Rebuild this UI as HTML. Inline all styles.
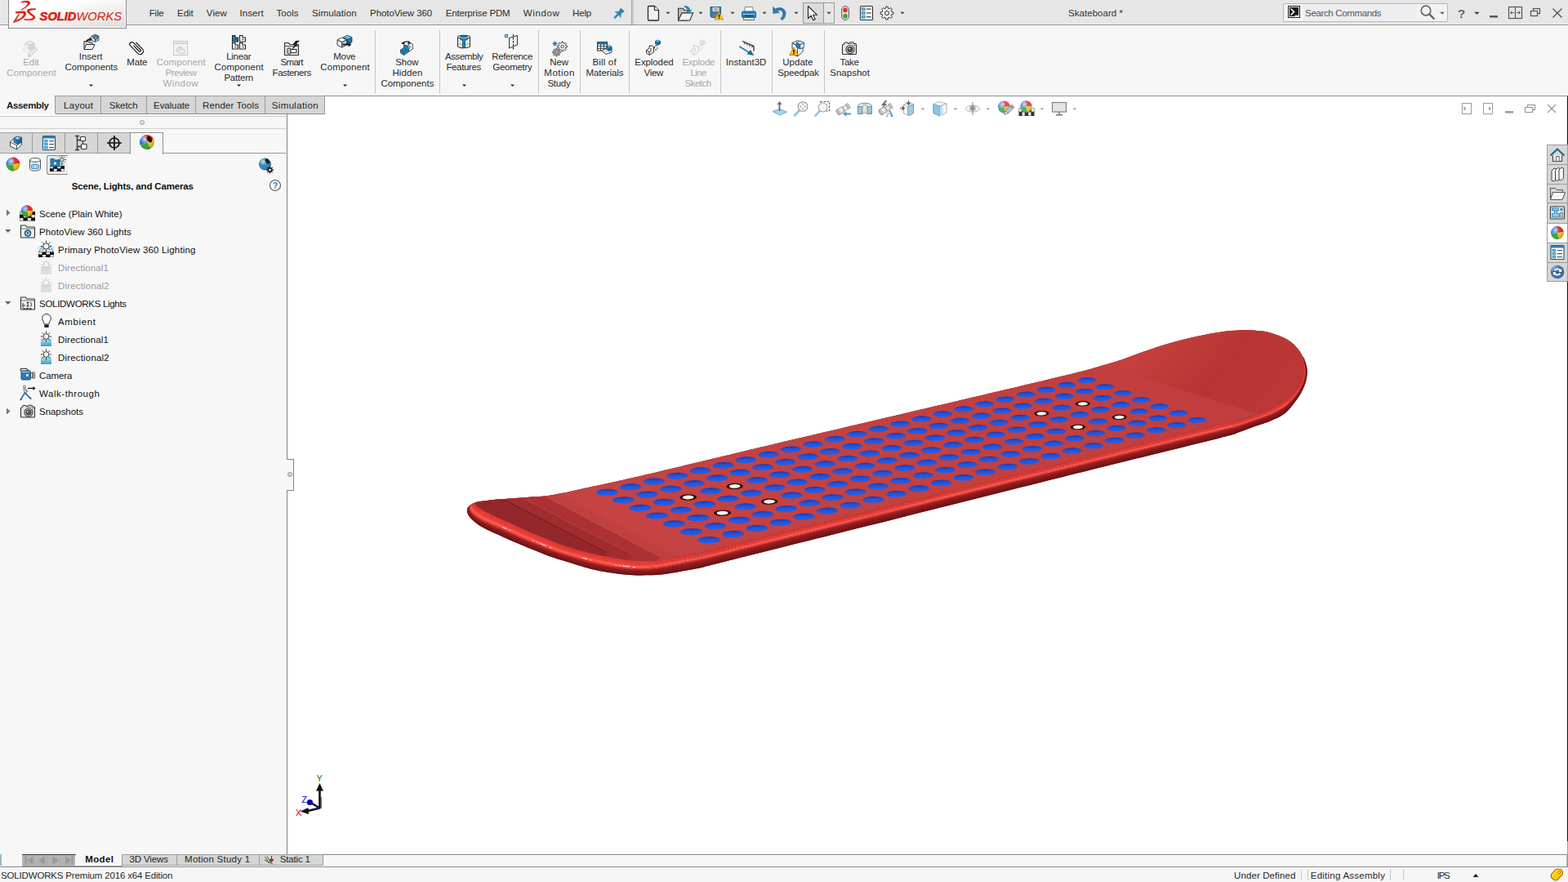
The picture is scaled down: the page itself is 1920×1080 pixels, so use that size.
<!DOCTYPE html>
<html lang="en"><head><meta charset="utf-8"><title>SOLIDWORKS Premium 2016 x64 Edition - Skateboard</title>
<style>
html,body{margin:0;padding:0;}
body{width:1920px;height:1080px;overflow:hidden;background:#fff;position:relative;font-family:"Liberation Sans", sans-serif;font-size:12px;color:#1e1e1e;}
header,section,aside,main,footer{display:block;margin:0;padding:0;}
.a{position:absolute;box-sizing:border-box;}
.t{position:absolute;white-space:pre;line-height:1;font-family:"Liberation Sans", sans-serif;}
svg{position:absolute;overflow:visible;}

#titlebar{left:0;top:0;width:1920px;height:30px;background:#e6e6e6;border-bottom:1px solid #8f8f8f;height:31px;}
#ribbon{left:0;top:31px;width:1920px;height:86px;background:#f6f6f6;}
#logo{left:10px;top:-2px;width:145px;height:37px;border:1px solid #8c8c8c;background:linear-gradient(168deg,#ffffff 30%,#dcdcdc 100%);box-shadow:inset 0 0 0 1px #fafafa;}
.vsep{width:1px;background:#c4c4c4;top:37px;height:77px;}
#cmtabs{left:0;top:117px;width:1920px;height:23px;}
.cmtab{top:117px;height:22px;background:#d6d6d6;border:1px solid #9c9c9c;border-bottom:none;}
#panel{left:0;top:140px;width:351px;height:906px;background:#f7f7f7;}
#panelborder{left:351px;top:140px;width:1px;height:906px;background:#828282;}
.ptab{top:162px;height:26px;width:41px;background:#d6d6d6;border:1px solid #9c9c9c;}
.rtab{left:1894px;width:26px;height:25px;background:#d6d6d6;border:1px solid #9c9c9c;}
#statusbar{left:0;top:1061px;width:1920px;height:19px;background:#f5f5f5;border-top:1px solid #828282;box-shadow:inset 0 1px 0 #fff;}
.btab{top:1046px;height:14px;background:#d6d6d6;border:1px solid #9c9c9c;}
.ssep{top:1064px;width:1px;height:14px;background:#c8c8c8;}

</style></head><body>
<header id="app-titlebar">
<div class="a" id="titlebar"></div>
<div class="a" style="left:0;top:29px;width:1920px;height:1px;background:#eeeeee"></div>
<div class="a" style="left:773px;top:0;width:1px;height:30px;background:#a8a8a8"></div>
<div class="a" style="left:1571px;top:4px;width:202px;height:23px;border:1px solid #b5b5b5;background:#f2f2f2;border-radius:2px"></div>
<div class="a" style="left:1596px;top:6px;width:139px;height:19px;background:#ededf2"></div>
<div class="a" style="left:1577px;top:7px;width:15px;height:15px;background:#1a1a1a;border:1px solid #222;box-shadow:inset 0 0 0 1px #e8e8e8"></div>
<div class="a" style="left:983px;top:3px;width:26px;height:26px;border:1px solid #8a9aa8;background:#dcdcdc"></div>
<div class="a" style="left:1008px;top:3px;width:14px;height:26px;border:1px solid #9a9a9a;border-left:none"></div>
<span class="t" style="left:182.80px;top:11.10px;font-size:11.5px;letter-spacing:-0.244px;color:#2a2a2a;">File</span>
<span class="t" style="left:217.10px;top:11.10px;font-size:11.5px;letter-spacing:-0.109px;color:#2a2a2a;">Edit</span>
<span class="t" style="left:252.80px;top:11.10px;font-size:11.5px;letter-spacing:0.127px;color:#2a2a2a;">View</span>
<span class="t" style="left:293.50px;top:11.10px;font-size:11.5px;letter-spacing:0.067px;color:#2a2a2a;">Insert</span>
<span class="t" style="left:338.50px;top:11.10px;font-size:11.5px;letter-spacing:0.060px;color:#2a2a2a;">Tools</span>
<span class="t" style="left:382.10px;top:11.10px;font-size:11.5px;letter-spacing:0.089px;color:#2a2a2a;">Simulation</span>
<span class="t" style="left:453.10px;top:11.10px;font-size:11.5px;letter-spacing:-0.088px;color:#2a2a2a;">PhotoView 360</span>
<span class="t" style="left:545.80px;top:11.10px;font-size:11.5px;letter-spacing:-0.182px;color:#2a2a2a;">Enterprise PDM</span>
<span class="t" style="left:640.80px;top:11.10px;font-size:11.5px;letter-spacing:0.639px;color:#2a2a2a;">Window</span>
<span class="t" style="left:701.10px;top:11.10px;font-size:11.5px;letter-spacing:-0.185px;color:#2a2a2a;">Help</span>
<span class="t" style="left:1308.10px;top:11.10px;font-size:11.5px;letter-spacing:0.027px;color:#333;">Skateboard *</span>
<span class="t" style="left:1598.10px;top:11.10px;font-size:11.5px;letter-spacing:-0.353px;color:#555;">Search Commands</span>
</header>
<section id="command-manager">
<div class="a" id="ribbon"></div>
<div class="a" style="left:0;top:31px;width:1920px;height:1px;background:#fdfdfd"></div>
<div class="a" id="logo"></div>
<div class="a vsep" style="left:459px"></div>
<div class="a vsep" style="left:538px"></div>
<div class="a vsep" style="left:659px"></div>
<div class="a vsep" style="left:710px"></div>
<div class="a vsep" style="left:770px"></div>
<div class="a vsep" style="left:882px"></div>
<div class="a vsep" style="left:945px"></div>
<div class="a vsep" style="left:1009px"></div>
<div class="a" style="left:0;top:117px;width:1920px;height:23px;background:#f6f6f6"></div>
<div class="a" style="left:0;top:139px;width:398px;height:1px;background:#8c8c8c"></div>
<div class="a" style="left:0;top:117px;width:1920px;height:1px;background:#8c8c8c"></div>
<div class="a" style="left:398px;top:118px;width:1522px;height:22px;background:#fff"></div>
<div class="a" style="left:0;top:117px;width:68px;height:23px;background:#f7f7f7"></div>
<div class="a cmtab" style="left:67px;width:57px"></div>
<div class="a cmtab" style="left:123px;width:57px"></div>
<div class="a cmtab" style="left:179px;width:61px"></div>
<div class="a cmtab" style="left:239px;width:86px"></div>
<div class="a cmtab" style="left:324px;width:74px"></div>
<span class="t" style="left:28.30px;top:70.70px;font-size:11.5px;letter-spacing:-0.109px;color:#a8a8a8;">Edit</span>
<span class="t" style="left:8.30px;top:83.70px;font-size:11.5px;letter-spacing:0.110px;color:#a8a8a8;">Component</span>
<span class="t" style="left:96.70px;top:63.70px;font-size:11.5px;letter-spacing:0.007px;color:#2a2a2a;">Insert</span>
<span class="t" style="left:79.40px;top:76.70px;font-size:11.5px;letter-spacing:-0.035px;color:#2a2a2a;">Components</span>
<span class="t" style="left:155.20px;top:70.70px;font-size:11.5px;letter-spacing:-0.093px;color:#2a2a2a;">Mate</span>
<span class="t" style="left:191.70px;top:70.70px;font-size:11.5px;letter-spacing:0.079px;color:#a8a8a8;">Component</span>
<span class="t" style="left:202.55px;top:83.70px;font-size:11.5px;letter-spacing:-0.426px;color:#a8a8a8;">Preview</span>
<span class="t" style="left:199.40px;top:96.70px;font-size:11.5px;letter-spacing:0.469px;color:#a8a8a8;">Window</span>
<span class="t" style="left:277.30px;top:63.70px;font-size:11.5px;letter-spacing:-0.324px;color:#2a2a2a;">Linear</span>
<span class="t" style="left:262.55px;top:76.70px;font-size:11.5px;letter-spacing:0.079px;color:#2a2a2a;">Component</span>
<span class="t" style="left:274.40px;top:89.70px;font-size:11.5px;letter-spacing:-0.221px;color:#2a2a2a;">Pattern</span>
<span class="t" style="left:343.55px;top:70.70px;font-size:11.5px;letter-spacing:-0.705px;color:#2a2a2a;">Smart</span>
<span class="t" style="left:333.55px;top:83.70px;font-size:11.5px;letter-spacing:-0.443px;color:#2a2a2a;">Fasteners</span>
<span class="t" style="left:408.30px;top:63.70px;font-size:11.5px;letter-spacing:-0.308px;color:#2a2a2a;">Move</span>
<span class="t" style="left:392.30px;top:76.70px;font-size:11.5px;letter-spacing:0.110px;color:#2a2a2a;">Component</span>
<span class="t" style="left:484.20px;top:70.70px;font-size:11.5px;letter-spacing:-0.110px;color:#2a2a2a;">Show</span>
<span class="t" style="left:480.40px;top:83.70px;font-size:11.5px;letter-spacing:0.109px;color:#2a2a2a;">Hidden</span>
<span class="t" style="left:466.40px;top:96.70px;font-size:11.5px;letter-spacing:-0.024px;color:#2a2a2a;">Components</span>
<span class="t" style="left:545.05px;top:63.70px;font-size:11.5px;letter-spacing:-0.444px;color:#2a2a2a;">Assembly</span>
<span class="t" style="left:546.40px;top:76.70px;font-size:11.5px;letter-spacing:-0.356px;color:#2a2a2a;">Features</span>
<span class="t" style="left:602.30px;top:63.70px;font-size:11.5px;letter-spacing:-0.370px;color:#2a2a2a;">Reference</span>
<span class="t" style="left:603.30px;top:76.70px;font-size:11.5px;letter-spacing:-0.286px;color:#2a2a2a;">Geometry</span>
<span class="t" style="left:673.30px;top:70.70px;font-size:11.5px;letter-spacing:-0.083px;color:#2a2a2a;">New</span>
<span class="t" style="left:666.30px;top:83.70px;font-size:11.5px;letter-spacing:0.514px;color:#2a2a2a;">Motion</span>
<span class="t" style="left:670.40px;top:96.70px;font-size:11.5px;letter-spacing:-0.293px;color:#2a2a2a;">Study</span>
<span class="t" style="left:725.40px;top:70.70px;font-size:11.5px;letter-spacing:0.187px;color:#2a2a2a;">Bill of</span>
<span class="t" style="left:717.55px;top:83.70px;font-size:11.5px;letter-spacing:-0.101px;color:#2a2a2a;">Materials</span>
<span class="t" style="left:777.30px;top:70.70px;font-size:11.5px;letter-spacing:-0.088px;color:#2a2a2a;">Exploded</span>
<span class="t" style="left:788.55px;top:83.70px;font-size:11.5px;letter-spacing:-0.290px;color:#2a2a2a;">View</span>
<span class="t" style="left:835.40px;top:70.70px;font-size:11.5px;letter-spacing:-0.244px;color:#a8a8a8;">Explode</span>
<span class="t" style="left:845.40px;top:83.70px;font-size:11.5px;letter-spacing:-0.550px;color:#a8a8a8;">Line</span>
<span class="t" style="left:838.55px;top:96.70px;font-size:11.5px;letter-spacing:-0.514px;color:#a8a8a8;">Sketch</span>
<span class="t" style="left:888.80px;top:70.70px;font-size:11.5px;letter-spacing:0.046px;color:#2a2a2a;">Instant3D</span>
<span class="t" style="left:958.30px;top:70.70px;font-size:11.5px;letter-spacing:0.021px;color:#2a2a2a;">Update</span>
<span class="t" style="left:952.30px;top:83.70px;font-size:11.5px;letter-spacing:-0.157px;color:#2a2a2a;">Speedpak</span>
<span class="t" style="left:1028.55px;top:70.70px;font-size:11.5px;letter-spacing:-0.349px;color:#2a2a2a;">Take</span>
<span class="t" style="left:1016.30px;top:83.70px;font-size:11.5px;letter-spacing:-0.001px;color:#2a2a2a;">Snapshot</span>
<span class="t" style="left:8.10px;top:124.10px;font-size:11.5px;letter-spacing:-0.363px;color:#1a1a1a;font-weight:700;">Assembly</span>
<span class="t" style="left:78.10px;top:124.10px;font-size:11.5px;letter-spacing:0.254px;color:#1e1e1e;">Layout</span>
<span class="t" style="left:133.80px;top:124.10px;font-size:11.5px;letter-spacing:-0.074px;color:#1e1e1e;">Sketch</span>
<span class="t" style="left:188.10px;top:124.10px;font-size:11.5px;letter-spacing:-0.095px;color:#1e1e1e;">Evaluate</span>
<span class="t" style="left:248.10px;top:124.10px;font-size:11.5px;letter-spacing:0.112px;color:#1e1e1e;">Render Tools</span>
<span class="t" style="left:332.80px;top:124.10px;font-size:11.5px;letter-spacing:0.344px;color:#1e1e1e;">Simulation</span>
</section>
<aside id="display-manager">
<div class="a" id="panel"></div>
<div class="a" id="panelborder"></div>
<div class="a" style="left:0;top:140px;width:351px;height:2px;background:#fdfdfd"></div>
<div class="a" style="left:0;top:142px;width:350px;height:1px;background:#c6c6c6"></div>
<div class="a" style="left:0;top:161px;width:350px;height:1px;background:#fdfdfd"></div>
<div class="a" style="left:0;top:157px;width:350px;height:1px;background:#d0d0d0"></div>
<div class="a" style="left:171px;top:147px;width:6px;height:6px;border-radius:50%;border:1px solid #9a9a9a;background:#e4e4e4"></div>
<div class="a" style="left:0;top:187px;width:350px;height:1px;background:#9c9c9c"></div>
<div class="a ptab" style="left:-1px"></div>
<div class="a ptab" style="left:39px"></div>
<div class="a ptab" style="left:79px"></div>
<div class="a ptab" style="left:119px"></div>
<div class="a" style="left:159px;top:162px;width:41px;height:27px;background:#f7f7f7;border:1px solid #8c8c8c;border-bottom:none;box-shadow:inset 1px 1px 0 #fff,inset -1px 0 0 #fff"></div>
<div class="a" style="left:57px;top:190px;width:26px;height:24px;border:1px solid #8a8a8a;border-right:none;border-radius:3px 0 0 3px;background:#ececec"></div>
<div class="a" style="left:351px;top:562px;width:9px;height:39px;background:#f7f7f7;border:1px solid #828282;border-left:none"></div>
<span class="t" style="left:87.70px;top:223.10px;font-size:11.5px;letter-spacing:-0.168px;color:#111;font-weight:700;">Scene, Lights, and Cameras</span>
<span class="t" style="left:48.10px;top:257.10px;font-size:11.5px;letter-spacing:-0.013px;color:#111;">Scene (Plain White)</span>
<span class="t" style="left:48.10px;top:279.10px;font-size:11.5px;letter-spacing:0.082px;color:#111;">PhotoView 360 Lights</span>
<span class="t" style="left:71.05px;top:301.10px;font-size:11.5px;letter-spacing:0.173px;color:#111;">Primary PhotoView 360 Lighting</span>
<span class="t" style="left:71.05px;top:323.10px;font-size:11.5px;letter-spacing:0.101px;color:#9a9a9a;">Directional1</span>
<span class="t" style="left:71.05px;top:345.10px;font-size:11.5px;letter-spacing:0.170px;color:#9a9a9a;">Directional2</span>
<span class="t" style="left:48.10px;top:367.10px;font-size:11.5px;letter-spacing:-0.303px;color:#111;">SOLIDWORKS Lights</span>
<span class="t" style="left:71.05px;top:389.10px;font-size:11.5px;letter-spacing:0.610px;color:#111;">Ambient</span>
<span class="t" style="left:71.05px;top:411.10px;font-size:11.5px;letter-spacing:0.101px;color:#111;">Directional1</span>
<span class="t" style="left:71.05px;top:433.10px;font-size:11.5px;letter-spacing:0.170px;color:#111;">Directional2</span>
<span class="t" style="left:48.10px;top:455.10px;font-size:11.5px;letter-spacing:-0.121px;color:#111;">Camera</span>
<span class="t" style="left:48.10px;top:477.10px;font-size:11.5px;letter-spacing:0.521px;color:#111;">Walk-through</span>
<span class="t" style="left:48.10px;top:499.10px;font-size:11.5px;letter-spacing:-0.070px;color:#111;">Snapshots</span>
</aside>
<main id="graphics-area">
<div class="a" style="left:352px;top:578px;width:6px;height:6px;border-radius:50%;background:#d8d8d8;border:1px solid #929292"></div>
<div class="a rtab" style="top:177px;height:25px;background:#d6d6d6"></div>
<div class="a rtab" style="top:201px;height:25px;background:#d6d6d6"></div>
<div class="a rtab" style="top:225px;height:24px;background:#d6d6d6"></div>
<div class="a rtab" style="top:248px;height:26px;background:#d6d6d6"></div>
<div class="a rtab" style="top:273px;height:25px;background:#fff"></div>
<div class="a rtab" style="top:297px;height:25px;background:#d6d6d6"></div>
<div class="a rtab" style="top:321px;height:24px;background:#d6d6d6"></div>
<div class="a" style="left:1919px;top:118px;width:1px;height:59px;background:#111"></div>
<div class="a" style="left:1919px;top:345px;width:1px;height:685px;background:#111"></div>
<div class="a" style="left:1919px;top:1030px;width:1px;height:16px;background:#9898b4"></div>
<svg id="board" style="left:0;top:0" width="1920" height="1080" viewBox="0 0 1920 1080">
<defs>
<linearGradient id="surfg" gradientUnits="userSpaceOnUse" x1="700" y1="640" x2="1500" y2="450">
<stop offset="0" stop-color="#c54343"/><stop offset="1" stop-color="#c03e3d"/></linearGradient>
<linearGradient id="tailg" gradientUnits="userSpaceOnUse" x1="1430" y1="400" x2="1560" y2="520">
<stop offset="0" stop-color="#c53f3c"/><stop offset="0.45" stop-color="#b73533"/><stop offset="1" stop-color="#bb3836"/></linearGradient>
<clipPath id="surfclip"><path d="M582.7 615.0C583.7 614.8 584.7 614.4 588.9 613.9C593.1 613.4 598.3 612.6 607.7 611.8C617.1 611.0 635.4 609.6 645.2 608.9C655.0 608.2 659.2 608.4 666.7 607.5C674.2 606.6 682.8 604.9 690.0 603.5C697.2 602.1 698.3 601.7 710.0 599.2C721.7 596.7 743.3 592.0 760.0 588.3C776.7 584.5 790.0 581.4 810.0 576.7C830.0 572.0 831.7 571.5 880.0 560.0C928.3 548.5 1030.0 524.5 1100.0 508.0C1170.0 491.5 1258.3 470.9 1300.0 460.8C1341.7 450.7 1337.5 451.0 1350.0 447.5C1362.5 444.0 1366.7 442.8 1375.0 440.0C1383.3 437.2 1390.3 434.1 1400.0 430.8C1409.7 427.5 1422.2 423.2 1433.3 420.0C1444.4 416.8 1455.6 414.1 1466.7 411.7C1477.8 409.3 1490.3 407.1 1500.0 405.8C1509.7 404.6 1518.3 404.3 1525.0 404.2C1531.7 404.1 1535.8 404.7 1540.0 405.0C1544.2 405.3 1546.9 405.6 1550.4 406.2C1553.9 406.9 1557.3 408.0 1560.8 409.2C1564.3 410.4 1567.8 411.6 1571.2 413.3C1574.7 415.0 1578.6 417.1 1581.7 419.6C1584.8 422.1 1587.9 425.7 1590.0 428.3C1592.1 430.9 1593.5 433.9 1594.2 435.0L1594.5 437.0C1594.8 439.5 1596.4 447.4 1596.4 452.0C1596.4 456.6 1596.0 460.4 1594.6 464.5C1593.2 468.6 1590.5 472.9 1588.0 476.5C1585.5 480.1 1582.6 483.2 1579.5 486.0C1576.4 488.8 1573.7 490.6 1569.2 493.3C1564.7 496.1 1558.8 499.7 1552.5 502.5C1546.2 505.3 1538.7 507.6 1531.7 510.0C1524.8 512.4 1517.8 514.9 1510.8 516.7C1503.8 518.5 1518.5 514.0 1490.0 520.8C1461.5 527.6 1405.0 541.6 1340.0 557.7C1275.0 573.8 1173.3 599.0 1100.0 617.2C1026.7 635.4 940.0 656.9 900.0 666.8C860.0 676.7 870.3 674.4 860.0 676.7C849.7 679.0 845.4 679.2 838.3 680.5C831.2 681.8 823.8 683.2 817.5 684.2C811.2 685.2 807.0 686.1 800.8 686.5C794.5 686.9 786.4 687.1 780.0 686.8C773.6 686.5 770.3 686.0 762.5 684.8C754.7 683.6 743.7 681.8 733.3 679.5C722.9 677.2 708.6 673.5 700.0 671.0C691.4 668.5 688.4 667.0 681.7 664.5C675.0 662.0 667.0 658.8 660.0 656.0C653.0 653.2 646.0 650.2 640.0 647.5C634.0 644.8 629.7 642.5 624.3 640.0C618.9 637.5 612.6 634.9 607.7 632.7C602.9 630.5 598.7 628.6 595.2 626.8C591.7 625.0 588.8 623.2 586.8 621.8C584.8 620.4 583.9 619.3 583.0 618.5C582.1 617.7 581.8 617.3 581.5 616.8C581.2 616.3 581.3 615.9 581.5 615.6C581.7 615.3 582.5 615.1 582.7 615.0Z"/></clipPath>
<linearGradient id="dotg" x1="0" y1="0" x2="0" y2="1"><stop offset="0" stop-color="#1238b4"/><stop offset="0.4" stop-color="#2254d8"/><stop offset="1" stop-color="#2b5fe2"/></linearGradient>
<filter id="bl1"><feGaussianBlur stdDeviation="0.7"/></filter>
</defs>
<path d="M582.7 615.0C583.7 614.8 584.7 614.4 588.9 613.9C593.1 613.4 598.3 612.6 607.7 611.8C617.1 611.0 635.4 609.6 645.2 608.9C655.0 608.2 659.2 608.4 666.7 607.5C674.2 606.6 682.8 604.9 690.0 603.5C697.2 602.1 698.3 601.7 710.0 599.2C721.7 596.7 743.3 592.0 760.0 588.3C776.7 584.5 790.0 581.4 810.0 576.7C830.0 572.0 831.7 571.5 880.0 560.0C928.3 548.5 1030.0 524.5 1100.0 508.0C1170.0 491.5 1258.3 470.9 1300.0 460.8C1341.7 450.7 1337.5 451.0 1350.0 447.5C1362.5 444.0 1366.7 442.8 1375.0 440.0C1383.3 437.2 1390.3 434.1 1400.0 430.8C1409.7 427.5 1422.2 423.2 1433.3 420.0C1444.4 416.8 1455.6 414.1 1466.7 411.7C1477.8 409.3 1490.3 407.1 1500.0 405.8C1509.7 404.6 1518.3 404.3 1525.0 404.2C1531.7 404.1 1535.8 404.7 1540.0 405.0C1544.2 405.3 1546.9 405.6 1550.4 406.2C1553.9 406.9 1557.3 408.0 1560.8 409.2C1564.3 410.4 1567.8 411.6 1571.2 413.3C1574.7 415.0 1578.6 417.1 1581.7 419.6C1584.8 422.1 1587.9 425.7 1590.0 428.3C1592.1 430.9 1593.5 433.9 1594.2 435.0L1596.8 438.5C1597.4 440.8 1600.1 447.4 1600.5 452.0C1600.9 456.6 1600.5 461.2 1599.3 466.0C1598.1 470.8 1595.9 476.0 1593.5 480.5C1591.1 485.0 1588.3 488.8 1585.0 493.0C1581.7 497.2 1578.2 502.3 1573.5 506.0C1568.8 509.7 1563.0 512.3 1556.7 515.0C1550.5 517.7 1543.0 519.8 1536.0 522.3C1529.0 524.8 1522.0 527.7 1515.0 530.0C1508.0 532.3 1522.7 529.0 1494.0 536.2C1465.3 543.5 1408.2 557.2 1343.0 573.5C1277.8 589.8 1176.3 615.3 1103.0 633.7C1029.7 652.1 943.2 673.7 903.0 683.8C862.8 693.9 873.2 691.6 862.0 694.2C850.8 696.8 844.3 697.8 836.0 699.3C827.7 700.8 818.8 702.4 812.0 703.2C805.2 704.0 801.2 704.1 795.0 704.3C788.8 704.5 781.5 704.5 775.0 704.2C768.5 703.9 764.0 703.6 756.0 702.5C748.0 701.4 737.5 700.0 727.0 697.5C716.5 695.0 701.8 690.2 693.0 687.5C684.2 684.8 680.8 684.0 674.0 681.5C667.2 679.0 659.0 675.6 652.0 672.8C645.0 670.0 638.0 667.0 632.0 664.5C626.0 662.0 621.3 659.9 616.0 657.5C610.7 655.1 604.7 652.5 600.0 650.3C595.3 648.0 591.5 646.2 588.0 644.0C584.5 641.8 581.3 639.1 579.0 637.0C576.7 634.9 575.2 633.4 574.0 631.5C572.8 629.6 572.1 627.4 572.0 625.6C571.9 623.8 572.4 622.3 573.5 620.8C574.6 619.3 577.7 617.5 578.5 616.8Z" fill="#701418"/>
<path d="M1594.5 437.0C1594.8 439.5 1596.4 447.4 1596.4 452.0C1596.4 456.6 1596.0 460.4 1594.6 464.5C1593.2 468.6 1590.5 472.9 1588.0 476.5C1585.5 480.1 1582.6 483.2 1579.5 486.0C1576.4 488.8 1573.7 490.6 1569.2 493.3C1564.7 496.1 1558.8 499.7 1552.5 502.5C1546.2 505.3 1538.7 507.6 1531.7 510.0C1524.8 512.4 1517.8 514.9 1510.8 516.7C1503.8 518.5 1518.5 514.0 1490.0 520.8C1461.5 527.6 1405.0 541.6 1340.0 557.7C1275.0 573.8 1173.3 599.0 1100.0 617.2C1026.7 635.4 940.0 656.9 900.0 666.8C860.0 676.7 870.3 674.4 860.0 676.7C849.7 679.0 845.4 679.2 838.3 680.5C831.2 681.8 823.8 683.2 817.5 684.2C811.2 685.2 807.0 686.1 800.8 686.5C794.5 686.9 786.4 687.1 780.0 686.8C773.6 686.5 770.3 686.0 762.5 684.8C754.7 683.6 743.7 681.8 733.3 679.5C722.9 677.2 708.6 673.5 700.0 671.0C691.4 668.5 688.4 667.0 681.7 664.5C675.0 662.0 667.0 658.8 660.0 656.0C653.0 653.2 646.0 650.2 640.0 647.5C634.0 644.8 629.7 642.5 624.3 640.0C618.9 637.5 612.6 634.9 607.7 632.7C602.9 630.5 598.7 628.6 595.2 626.8C591.7 625.0 588.8 623.2 586.8 621.8C584.8 620.4 583.9 619.3 583.0 618.5C582.1 617.7 581.8 617.3 581.5 616.8C581.2 616.3 581.3 615.9 581.5 615.6C581.7 615.3 582.5 615.1 582.7 615.0L582.4 615.1C582.1 615.3 581.1 615.6 580.8 616.0C580.6 616.4 580.5 616.9 580.7 617.5C580.9 618.1 581.4 618.6 582.3 619.5C583.2 620.4 584.1 621.6 586.2 623.0C588.3 624.4 591.2 626.2 594.7 628.1C598.2 629.9 602.3 631.8 607.2 634.0C612.0 636.1 618.3 638.8 623.7 641.2C629.1 643.7 633.5 646.0 639.4 648.7C645.4 651.3 652.5 654.3 659.4 657.2C666.4 660.0 674.5 663.2 681.2 665.7C687.8 668.2 690.9 669.6 699.5 672.1C708.1 674.6 722.4 678.4 732.9 680.7C743.3 683.1 754.3 684.8 762.1 686.0C769.9 687.2 773.3 687.7 779.7 688.0C786.0 688.3 794.2 688.1 800.4 687.7C806.7 687.2 810.9 686.4 817.2 685.4C823.5 684.3 831.0 682.9 838.2 681.6C845.3 680.3 849.8 680.0 860.1 677.7C870.4 675.4 860.2 677.7 900.2 667.7C940.2 657.8 1026.8 636.3 1100.2 618.1C1173.5 599.9 1275.2 574.7 1340.2 558.6C1405.2 542.5 1461.7 528.5 1490.2 521.7C1518.7 514.8 1504.1 519.3 1511.0 517.4C1518.0 515.6 1525.0 513.1 1531.9 510.7C1538.9 508.3 1546.5 506.0 1552.7 503.2C1559.0 500.4 1564.9 496.8 1569.4 494.0C1574.0 491.2 1576.7 489.3 1579.8 486.4C1583.0 483.5 1585.8 480.4 1588.3 476.7C1590.8 473.1 1593.5 468.7 1594.9 464.6C1596.3 460.5 1596.7 456.6 1596.7 452.0C1596.6 447.4 1595.0 439.6 1594.6 437.1Z" fill="rgb(214, 61, 57)"/>
<path d="M1594.6 437.1C1594.9 439.5 1596.5 447.4 1596.6 452.0C1596.6 456.6 1596.2 460.4 1594.8 464.6C1593.4 468.7 1590.7 473.0 1588.2 476.7C1585.7 480.3 1582.9 483.4 1579.7 486.3C1576.6 489.1 1573.9 491.0 1569.4 493.8C1564.8 496.5 1558.9 500.2 1552.6 502.9C1546.4 505.7 1538.8 508.1 1531.9 510.4C1524.9 512.8 1517.9 515.4 1510.9 517.2C1504.0 519.0 1518.6 514.5 1490.1 521.3C1461.7 528.2 1405.1 542.2 1340.1 558.3C1275.1 574.3 1173.4 599.6 1100.1 617.8C1026.8 636.0 940.1 657.5 900.1 667.4C860.1 677.3 870.4 675.0 860.1 677.3C849.8 679.6 845.3 679.9 838.2 681.2C831.1 682.5 823.6 683.9 817.3 684.9C811.0 686.0 806.8 686.8 800.6 687.3C794.3 687.7 786.2 687.8 779.8 687.6C773.4 687.3 770.0 686.8 762.2 685.6C754.4 684.4 743.4 682.6 733.0 680.3C722.6 678.0 708.3 674.2 699.7 671.7C691.1 669.2 688.0 667.7 681.4 665.2C674.7 662.8 666.6 659.6 659.6 656.7C652.7 653.9 645.6 650.9 639.6 648.2C633.7 645.6 629.3 643.2 623.9 640.8C618.6 638.3 612.2 635.7 607.3 633.5C602.5 631.3 598.4 629.4 594.9 627.6C591.4 625.8 588.5 624.0 586.4 622.6C584.4 621.1 583.4 620.0 582.5 619.2C581.6 618.3 581.2 617.8 581.0 617.3C580.7 616.7 580.8 616.2 581.1 615.9C581.3 615.5 582.2 615.2 582.5 615.1L582.0 615.3C581.7 615.5 580.5 616.0 580.2 616.5C579.8 617.0 579.7 617.6 579.9 618.3C580.1 619.0 580.6 619.6 581.6 620.6C582.5 621.6 583.5 622.7 585.6 624.2C587.7 625.6 590.6 627.5 594.1 629.3C597.6 631.2 601.8 633.0 606.6 635.2C611.4 637.4 617.8 640.0 623.2 642.4C628.5 644.9 632.9 647.2 638.9 649.8C644.9 652.5 651.9 655.5 658.9 658.3C665.9 661.1 673.9 664.3 680.6 666.8C687.3 669.3 690.4 670.8 699.0 673.3C707.7 675.8 722.0 679.7 732.4 682.0C742.9 684.3 753.8 686.0 761.6 687.2C769.4 688.4 772.9 688.9 779.3 689.2C785.7 689.5 793.8 689.3 800.0 688.9C806.3 688.4 810.5 687.6 816.8 686.5C823.2 685.5 830.8 684.0 838.0 682.7C845.3 681.4 849.8 681.0 860.2 678.6C870.6 676.3 860.3 678.6 900.3 668.7C940.4 658.8 1027.0 637.2 1100.3 619.0C1173.7 600.8 1275.3 575.5 1340.3 559.5C1405.4 543.4 1462.0 529.4 1490.4 522.5C1518.9 515.6 1504.3 520.0 1511.3 518.2C1518.2 516.3 1525.2 513.7 1532.2 511.4C1539.1 509.0 1546.7 506.7 1553.0 503.9C1559.2 501.1 1565.2 497.6 1569.7 494.8C1574.2 491.9 1577.0 489.8 1580.2 486.9C1583.3 483.9 1586.2 480.7 1588.7 477.0C1591.2 473.3 1593.8 468.8 1595.2 464.7C1596.5 460.5 1597.0 456.6 1596.9 452.0C1596.8 447.4 1595.1 439.7 1594.8 437.2Z" fill="rgb(225, 59, 55)"/>
<path d="M1594.7 437.2C1595.1 439.6 1596.8 447.4 1596.8 452.0C1596.9 456.6 1596.4 460.5 1595.1 464.7C1593.7 468.8 1591.1 473.2 1588.6 476.9C1586.0 480.6 1583.2 483.8 1580.1 486.7C1576.9 489.6 1574.1 491.7 1569.6 494.5C1565.1 497.3 1559.1 500.9 1552.9 503.6C1546.6 506.4 1539.0 508.7 1532.1 511.1C1525.1 513.5 1518.1 516.1 1511.2 517.9C1504.2 519.8 1518.8 515.3 1490.4 522.2C1461.9 529.1 1405.3 543.1 1340.3 559.1C1275.3 575.2 1173.6 600.5 1100.3 618.7C1026.9 636.9 940.3 658.4 900.3 668.3C860.3 678.3 870.5 676.0 860.2 678.3C849.8 680.6 845.3 681.0 838.1 682.3C830.9 683.6 823.3 685.1 816.9 686.1C810.6 687.1 806.4 688.0 800.2 688.4C793.9 688.9 785.8 689.0 779.4 688.8C773.0 688.5 769.6 688.0 761.8 686.8C754.0 685.6 743.0 683.9 732.6 681.5C722.2 679.2 707.8 675.4 699.2 672.9C690.6 670.3 687.5 668.9 680.8 666.4C674.1 663.9 666.1 660.7 659.1 657.9C652.1 655.1 645.1 652.1 639.1 649.4C633.1 646.8 628.7 644.4 623.4 642.0C618.0 639.5 611.6 636.9 606.8 634.8C602.0 632.6 597.8 630.7 594.3 628.9C590.8 627.0 587.9 625.2 585.8 623.7C583.7 622.3 582.8 621.2 581.8 620.2C580.9 619.2 580.4 618.7 580.2 618.0C580.0 617.4 580.1 616.8 580.4 616.3C580.7 615.9 581.8 615.4 582.1 615.2L581.7 615.5C581.3 615.7 579.9 616.3 579.5 616.9C579.1 617.5 578.9 618.2 579.1 619.0C579.3 619.8 579.9 620.6 580.8 621.6C581.8 622.7 582.9 623.9 585.0 625.3C587.1 626.8 590.1 628.7 593.6 630.6C597.1 632.4 601.2 634.3 606.1 636.5C610.9 638.6 617.2 641.2 622.6 643.6C628.0 646.0 632.4 648.4 638.3 651.0C644.3 653.7 651.4 656.6 658.3 659.5C665.3 662.3 673.4 665.5 680.1 668.0C686.8 670.5 689.9 671.9 698.6 674.4C707.2 676.9 721.6 680.9 732.0 683.2C742.4 685.6 753.3 687.3 761.2 688.5C769.0 689.7 772.6 690.1 779.0 690.4C785.4 690.7 793.4 690.5 799.6 690.1C805.9 689.6 810.1 688.7 816.5 687.7C822.9 686.6 830.6 685.1 837.9 683.8C845.2 682.4 849.9 682.0 860.3 679.6C870.8 677.3 860.5 679.6 900.5 669.6C940.5 659.7 1027.2 638.2 1100.5 620.0C1173.8 601.7 1275.5 576.4 1340.5 560.3C1405.5 544.2 1462.2 530.3 1490.7 523.4C1519.2 516.5 1504.5 520.8 1511.5 518.9C1518.5 517.0 1525.5 514.4 1532.4 512.0C1539.4 509.7 1546.9 507.3 1553.2 504.6C1559.5 501.8 1565.4 498.4 1569.9 495.5C1574.5 492.6 1577.3 490.3 1580.5 487.3C1583.7 484.2 1586.5 481.0 1589.0 477.2C1591.5 473.5 1594.1 469.0 1595.5 464.8C1596.8 460.6 1597.2 456.6 1597.2 452.0C1597.1 447.4 1595.3 439.7 1594.9 437.3Z" fill="rgb(230, 59, 55)"/>
<path d="M1594.9 437.2C1595.2 439.7 1597.0 447.4 1597.1 452.0C1597.1 456.6 1596.7 460.6 1595.4 464.7C1594.0 468.9 1591.4 473.4 1588.9 477.1C1586.4 480.9 1583.6 484.1 1580.4 487.1C1577.2 490.1 1574.4 492.4 1569.9 495.2C1565.3 498.1 1559.4 501.6 1553.1 504.3C1546.9 507.1 1539.3 509.4 1532.3 511.8C1525.4 514.2 1518.4 516.8 1511.4 518.7C1504.5 520.5 1519.1 516.2 1490.6 523.1C1462.1 530.0 1405.5 543.9 1340.4 560.0C1275.4 576.1 1173.8 601.4 1100.4 619.6C1027.1 637.8 940.5 659.4 900.4 669.3C860.4 679.2 870.7 676.9 860.3 679.3C849.9 681.6 845.2 682.0 837.9 683.4C830.7 684.7 823.0 686.2 816.6 687.3C810.3 688.3 806.0 689.2 799.8 689.6C793.5 690.1 785.5 690.2 779.1 690.0C772.7 689.7 769.1 689.2 761.3 688.0C753.5 686.8 742.6 685.1 732.2 682.8C721.7 680.4 707.4 676.5 698.7 674.0C690.1 671.5 687.0 670.1 680.3 667.6C673.6 665.1 665.5 661.9 658.5 659.1C651.6 656.2 644.5 653.2 638.5 650.6C632.6 647.9 628.2 645.6 622.8 643.2C617.4 640.8 611.1 638.2 606.3 636.0C601.4 633.8 597.3 632.0 593.8 630.1C590.3 628.3 587.3 626.4 585.2 624.9C583.1 623.4 582.1 622.3 581.1 621.2C580.1 620.2 579.6 619.5 579.4 618.7C579.2 618.0 579.3 617.3 579.7 616.7C580.1 616.2 581.4 615.6 581.8 615.4L581.3 615.6C580.9 615.9 579.3 616.6 578.8 617.3C578.3 618.0 578.1 618.8 578.3 619.7C578.5 620.6 579.1 621.5 580.1 622.7C581.1 623.8 582.2 625.0 584.4 626.5C586.5 628.1 589.6 630.0 593.1 631.8C596.6 633.7 600.7 635.5 605.5 637.7C610.3 639.9 616.6 642.4 622.0 644.8C627.4 647.2 631.8 649.5 637.8 652.2C643.8 654.8 650.8 657.8 657.8 660.6C664.8 663.5 672.9 666.7 679.6 669.2C686.3 671.7 689.4 673.0 698.1 675.5C706.7 678.1 721.1 682.1 731.6 684.5C742.0 686.8 752.9 688.5 760.7 689.7C768.6 690.9 772.2 691.3 778.6 691.6C785.0 691.9 793.0 691.7 799.3 691.2C805.5 690.8 809.7 689.9 816.2 688.8C822.6 687.8 830.4 686.2 837.8 684.8C845.1 683.5 850.0 683.0 860.4 680.6C870.9 678.2 860.6 680.5 900.7 670.6C940.7 660.6 1027.3 639.1 1100.7 620.9C1174.0 602.6 1275.6 577.3 1340.7 561.2C1405.7 545.1 1462.4 531.1 1490.9 524.2C1519.4 517.3 1504.8 521.6 1511.7 519.7C1518.7 517.7 1525.7 515.1 1532.7 512.7C1539.6 510.3 1547.2 508.0 1553.4 505.3C1559.7 502.5 1565.6 499.2 1570.2 496.2C1574.8 493.3 1577.7 490.8 1580.8 487.7C1584.0 484.6 1586.9 481.3 1589.3 477.5C1591.8 473.7 1594.4 469.1 1595.7 464.9C1597.1 460.6 1597.5 456.6 1597.4 452.0C1597.3 447.4 1595.5 439.8 1595.1 437.4Z" fill="rgb(233, 62, 56)"/>
<path d="M1595.0 437.3C1595.4 439.8 1597.2 447.4 1597.3 452.0C1597.4 456.6 1597.0 460.6 1595.6 464.8C1594.3 469.1 1591.7 473.6 1589.2 477.4C1586.7 481.2 1583.9 484.5 1580.7 487.6C1577.5 490.7 1574.7 493.1 1570.1 496.0C1565.5 498.9 1559.6 502.3 1553.3 505.0C1547.1 507.8 1539.5 510.1 1532.6 512.5C1525.6 514.9 1518.6 517.5 1511.6 519.4C1504.7 521.3 1519.3 517.0 1490.8 523.9C1462.3 530.8 1405.6 544.8 1340.6 560.9C1275.6 577.0 1173.9 602.3 1100.6 620.5C1027.3 638.8 940.6 660.3 900.6 670.2C860.6 680.2 870.9 677.9 860.4 680.2C849.9 682.6 845.2 683.1 837.8 684.5C830.5 685.8 822.7 687.4 816.3 688.4C809.9 689.5 805.6 690.4 799.4 690.8C793.1 691.3 785.2 691.4 778.7 691.2C772.3 690.9 768.7 690.4 760.9 689.2C753.0 688.0 742.2 686.4 731.7 684.0C721.3 681.7 706.9 677.7 698.2 675.1C689.6 672.6 686.5 671.3 679.8 668.8C673.1 666.3 665.0 663.0 658.0 660.2C651.0 657.4 644.0 654.4 638.0 651.8C632.0 649.1 627.6 646.8 622.2 644.4C616.8 642.0 610.5 639.4 605.7 637.3C600.9 635.1 596.8 633.2 593.3 631.4C589.8 629.5 586.7 627.6 584.6 626.1C582.4 624.6 581.4 623.4 580.4 622.3C579.4 621.2 578.8 620.3 578.6 619.5C578.4 618.6 578.6 617.8 579.1 617.2C579.5 616.5 581.0 615.8 581.4 615.5L581.0 615.8C580.5 616.1 578.7 617.0 578.2 617.8C577.6 618.6 577.3 619.5 577.5 620.5C577.7 621.5 578.4 622.5 579.4 623.7C580.4 624.9 581.6 626.1 583.8 627.7C586.0 629.3 589.0 631.2 592.6 633.1C596.1 635.0 600.1 636.8 605.0 639.0C609.8 641.1 616.1 643.6 621.4 646.0C626.8 648.4 631.3 650.7 637.2 653.4C643.2 656.0 650.3 659.0 657.2 661.8C664.2 664.6 672.3 667.9 679.0 670.4C685.8 672.8 688.9 674.1 697.6 676.7C706.3 679.2 720.7 683.3 731.1 685.7C741.6 688.1 752.4 689.7 760.3 690.9C768.1 692.1 771.8 692.5 778.3 692.8C784.7 693.0 792.6 692.9 798.9 692.4C805.1 692.0 809.4 691.1 815.8 690.0C822.3 688.9 830.2 687.3 837.6 685.9C845.1 684.5 850.0 684.0 860.6 681.6C871.1 679.2 860.8 681.5 900.8 671.5C940.9 661.6 1027.5 640.0 1100.8 621.8C1174.2 603.5 1275.8 578.2 1340.8 562.1C1405.9 546.0 1462.6 532.0 1491.1 525.1C1519.6 518.1 1505.0 522.3 1512.0 520.4C1518.9 518.5 1525.9 515.8 1532.9 513.4C1539.8 511.0 1547.4 508.7 1553.7 506.0C1559.9 503.2 1565.9 499.9 1570.4 497.0C1575.0 494.0 1578.0 491.3 1581.2 488.1C1584.4 484.9 1587.2 481.6 1589.7 477.7C1592.2 473.9 1594.7 469.2 1596.0 465.0C1597.4 460.7 1597.8 456.6 1597.7 452.0C1597.5 447.4 1595.6 439.9 1595.2 437.5Z" fill="rgb(236, 64, 58)"/>
<path d="M1595.2 437.4C1595.6 439.9 1597.4 447.4 1597.6 452.0C1597.7 456.6 1597.3 460.7 1595.9 464.9C1594.6 469.2 1592.0 473.8 1589.6 477.6C1587.1 481.5 1584.3 484.8 1581.1 488.0C1577.9 491.2 1574.9 493.7 1570.4 496.7C1565.8 499.7 1559.8 503.0 1553.6 505.7C1547.3 508.5 1539.8 510.8 1532.8 513.2C1525.9 515.6 1518.8 518.2 1511.9 520.1C1504.9 522.1 1519.5 517.8 1491.0 524.8C1462.5 531.7 1405.8 545.7 1340.8 561.8C1275.7 577.9 1174.1 603.2 1100.8 621.5C1027.4 639.7 940.8 661.2 900.8 671.2C860.7 681.1 871.0 678.8 860.5 681.2C850.0 683.6 845.1 684.1 837.7 685.5C830.3 686.9 822.4 688.5 815.9 689.6C809.5 690.7 805.3 691.5 799.0 692.0C792.7 692.5 784.8 692.6 778.4 692.4C772.0 692.1 768.3 691.6 760.4 690.5C752.6 689.3 741.7 687.6 731.3 685.3C720.8 682.9 706.4 678.8 697.8 676.3C689.1 673.7 686.0 672.4 679.2 669.9C672.5 667.4 664.4 664.2 657.4 661.4C650.5 658.5 643.4 655.6 637.4 652.9C631.5 650.3 627.0 648.0 621.6 645.6C616.3 643.2 610.0 640.7 605.2 638.5C600.3 636.4 596.3 634.5 592.8 632.7C589.2 630.8 586.2 628.8 584.0 627.3C581.8 625.7 580.7 624.5 579.7 623.3C578.6 622.1 578.0 621.2 577.8 620.2C577.6 619.3 577.9 618.4 578.4 617.6C578.9 616.9 580.6 616.0 581.1 615.7L580.6 615.9C580.1 616.3 578.1 617.3 577.5 618.2C576.9 619.1 576.6 620.1 576.8 621.2C576.9 622.3 577.6 623.5 578.7 624.7C579.7 626.0 580.9 627.3 583.2 628.9C585.4 630.5 588.5 632.5 592.0 634.4C595.6 636.3 599.6 638.1 604.4 640.2C609.2 642.4 615.5 644.8 620.9 647.2C626.2 649.6 630.7 651.9 636.7 654.5C642.7 657.1 649.7 660.1 656.7 662.9C663.7 665.8 671.8 669.0 678.5 671.5C685.3 674.0 688.4 675.3 697.1 677.8C705.8 680.4 720.2 684.6 730.7 686.9C741.1 689.3 751.9 690.9 759.8 692.1C767.7 693.3 771.5 693.7 777.9 694.0C784.4 694.2 792.2 694.1 798.5 693.6C804.7 693.1 809.0 692.3 815.5 691.2C822.0 690.1 830.0 688.5 837.5 687.0C845.0 685.6 850.1 685.0 860.7 682.5C871.2 680.1 860.9 682.4 901.0 672.5C941.1 662.5 1027.7 641.0 1101.0 622.7C1174.3 604.5 1275.9 579.1 1341.0 563.0C1406.1 546.8 1462.8 532.9 1491.3 525.9C1519.9 519.0 1505.2 523.1 1512.2 521.1C1519.2 519.2 1526.2 516.5 1533.1 514.1C1540.1 511.7 1547.6 509.4 1553.9 506.7C1560.2 503.9 1566.1 500.7 1570.7 497.7C1575.3 494.7 1578.3 491.9 1581.5 488.6C1584.7 485.3 1587.5 481.9 1590.0 478.0C1592.5 474.0 1595.0 469.4 1596.3 465.1C1597.6 460.7 1598.1 456.6 1597.9 452.0C1597.7 447.4 1595.8 440.0 1595.3 437.6Z" fill="rgb(247, 84, 76)"/>
<path d="M1595.3 437.5C1595.7 439.9 1597.7 447.4 1597.8 452.0C1598.0 456.6 1597.5 460.7 1596.2 465.0C1594.9 469.3 1592.4 474.0 1589.9 477.9C1587.4 481.8 1584.6 485.2 1581.4 488.4C1578.2 491.7 1575.2 494.4 1570.6 497.4C1566.0 500.4 1560.1 503.7 1553.8 506.4C1547.6 509.2 1540.0 511.4 1533.0 513.9C1526.1 516.3 1519.1 518.9 1512.1 520.9C1505.2 522.8 1519.8 518.7 1491.3 525.6C1462.7 532.6 1406.0 546.5 1340.9 562.7C1275.9 578.8 1174.3 604.1 1100.9 622.4C1027.6 640.6 941.0 662.2 900.9 672.1C860.9 682.1 871.2 679.8 860.6 682.2C850.1 684.6 845.1 685.2 837.6 686.6C830.0 688.1 822.1 689.7 815.6 690.7C809.1 691.8 804.9 692.7 798.6 693.2C792.4 693.7 784.5 693.8 778.1 693.6C771.6 693.3 767.8 692.9 760.0 691.7C752.1 690.5 741.3 688.9 730.9 686.5C720.4 684.1 706.0 680.0 697.3 677.4C688.6 674.8 685.4 673.6 678.7 671.1C672.0 668.6 663.9 665.4 656.9 662.5C649.9 659.7 642.9 656.7 636.9 654.1C630.9 651.5 626.5 649.2 621.1 646.8C615.7 644.4 609.4 641.9 604.6 639.8C599.8 637.6 595.8 635.8 592.2 633.9C588.7 632.0 585.6 630.1 583.4 628.5C581.2 626.9 580.0 625.6 578.9 624.4C577.9 623.1 577.2 622.0 577.0 620.9C576.8 619.9 577.1 618.9 577.7 618.0C578.4 617.2 580.2 616.2 580.7 615.8L580.2 616.0C579.7 616.5 577.5 617.7 576.8 618.6C576.1 619.6 575.8 620.7 576.0 621.9C576.1 623.1 576.9 624.4 578.0 625.8C579.1 627.1 580.3 628.4 582.6 630.1C584.8 631.7 588.0 633.7 591.5 635.6C595.1 637.5 599.1 639.3 603.9 641.5C608.7 643.6 614.9 646.1 620.3 648.4C625.7 650.8 630.2 653.1 636.1 655.7C642.1 658.3 649.2 661.3 656.1 664.1C663.1 666.9 671.2 670.2 678.0 672.7C684.7 675.2 687.9 676.4 696.6 679.0C705.3 681.5 719.8 685.8 730.3 688.2C740.7 690.6 751.5 692.2 759.4 693.3C767.3 694.5 771.1 694.9 777.6 695.2C784.0 695.4 791.8 695.3 798.1 694.8C804.4 694.3 808.6 693.4 815.1 692.3C821.7 691.2 829.8 689.6 837.4 688.1C845.0 686.6 850.1 686.0 860.8 683.5C871.4 681.1 861.1 683.4 901.2 673.4C941.2 663.4 1027.8 641.9 1101.2 623.6C1174.5 605.4 1276.1 580.0 1341.2 563.8C1406.2 547.7 1463.0 533.8 1491.6 526.8C1520.1 519.8 1505.5 523.9 1512.4 521.9C1519.4 519.9 1526.4 517.2 1533.4 514.8C1540.3 512.4 1547.9 510.1 1554.1 507.4C1560.4 504.6 1566.3 501.5 1570.9 498.4C1575.6 495.4 1578.6 492.4 1581.9 489.0C1585.1 485.6 1587.9 482.2 1590.4 478.2C1592.8 474.2 1595.3 469.5 1596.6 465.1C1597.9 460.8 1598.3 456.6 1598.2 452.0C1598.0 447.4 1595.9 440.0 1595.5 437.6Z" fill="rgb(251, 94, 85)"/>
<path d="M1595.4 437.6C1595.9 440.0 1597.9 447.4 1598.1 452.0C1598.2 456.6 1597.8 460.8 1596.5 465.1C1595.2 469.5 1592.7 474.2 1590.2 478.1C1587.8 482.1 1585.0 485.5 1581.7 488.8C1578.5 492.2 1575.5 495.1 1570.8 498.2C1566.2 501.2 1560.3 504.4 1554.0 507.1C1547.8 509.8 1540.2 512.1 1533.3 514.5C1526.3 517.0 1519.3 519.6 1512.3 521.6C1505.4 523.6 1520.0 519.5 1491.5 526.5C1462.9 533.5 1406.2 547.4 1341.1 563.5C1276.0 579.7 1174.4 605.0 1101.1 623.3C1027.8 641.5 941.2 663.1 901.1 673.1C861.0 683.0 871.4 680.7 860.7 683.2C850.1 685.6 845.0 686.3 837.4 687.7C829.8 689.2 821.8 690.8 815.3 691.9C808.7 693.0 804.5 693.9 798.2 694.4C792.0 694.9 784.2 695.0 777.7 694.8C771.3 694.5 767.4 694.1 759.5 692.9C751.6 691.7 740.9 690.1 730.4 687.7C720.0 685.3 705.5 681.1 696.8 678.5C688.1 676.0 684.9 674.8 678.2 672.3C671.4 669.8 663.3 666.5 656.3 663.7C649.4 660.9 642.3 657.9 636.3 655.3C630.4 652.7 625.9 650.4 620.5 648.0C615.1 645.6 608.9 643.1 604.1 641.0C599.3 638.9 595.2 637.1 591.7 635.2C588.1 633.3 585.0 631.3 582.8 629.6C580.5 628.0 579.3 626.7 578.2 625.4C577.1 624.1 576.4 622.8 576.2 621.7C576.1 620.5 576.4 619.4 577.1 618.5C577.8 617.5 579.8 616.4 580.4 616.0L579.9 616.2C579.3 616.7 577.0 618.0 576.2 619.1C575.4 620.1 575.0 621.4 575.2 622.7C575.3 624.0 576.1 625.4 577.2 626.8C578.4 628.3 579.7 629.6 581.9 631.3C584.2 632.9 587.4 635.0 591.0 636.9C594.5 638.8 598.5 640.6 603.3 642.7C608.1 644.8 614.3 647.3 619.7 649.6C625.1 652.0 629.6 654.3 635.6 656.9C641.6 659.5 648.6 662.4 655.6 665.3C662.6 668.1 670.7 671.4 677.5 673.9C684.2 676.3 687.4 677.5 696.1 680.1C704.9 682.7 719.4 687.0 729.8 689.4C740.3 691.8 751.0 693.4 758.9 694.6C766.8 695.7 770.8 696.1 777.2 696.4C783.7 696.6 791.4 696.5 797.7 696.0C804.0 695.5 808.2 694.6 814.8 693.5C821.4 692.4 829.6 690.7 837.2 689.2C844.9 687.7 850.2 687.0 860.9 684.5C871.6 682.0 861.3 684.3 901.3 674.4C941.4 664.4 1028.0 642.8 1101.3 624.5C1174.7 606.3 1276.3 580.9 1341.3 564.7C1406.4 548.6 1463.2 534.7 1491.8 527.6C1520.3 520.6 1505.7 524.6 1512.7 522.6C1519.6 520.6 1526.7 517.9 1533.6 515.5C1540.6 513.0 1548.1 510.8 1554.4 508.1C1560.6 505.3 1566.6 502.3 1571.2 499.2C1575.8 496.1 1578.9 492.9 1582.2 489.4C1585.4 486.0 1588.2 482.5 1590.7 478.5C1593.1 474.4 1595.6 469.6 1596.9 465.2C1598.2 460.8 1598.6 456.6 1598.4 452.0C1598.2 447.4 1596.1 440.1 1595.6 437.7Z" fill="rgb(239, 79, 71)"/>
<path d="M1595.6 437.7C1596.0 440.1 1598.1 447.4 1598.3 452.0C1598.5 456.6 1598.1 460.8 1596.8 465.2C1595.5 469.6 1593.0 474.4 1590.6 478.4C1588.1 482.4 1585.3 485.8 1582.1 489.3C1578.8 492.7 1575.7 495.8 1571.1 498.9C1566.5 502.0 1560.5 505.1 1554.3 507.8C1548.0 510.5 1540.5 512.8 1533.5 515.2C1526.6 517.6 1519.6 520.3 1512.6 522.3C1505.6 524.4 1520.2 520.3 1491.7 527.3C1463.1 534.3 1406.3 548.3 1341.3 564.4C1276.2 580.6 1174.6 605.9 1101.3 624.2C1027.9 642.5 941.3 664.0 901.3 674.0C861.2 684.0 871.5 681.7 860.8 684.1C850.2 686.6 844.9 687.3 837.3 688.8C829.6 690.3 821.5 691.9 814.9 693.1C808.4 694.2 804.1 695.1 797.8 695.6C791.6 696.0 783.8 696.2 777.4 696.0C770.9 695.7 767.0 695.3 759.1 694.1C751.2 693.0 740.4 691.4 730.0 689.0C719.5 686.6 705.0 682.3 696.3 679.7C687.6 677.1 684.4 675.9 677.6 673.4C670.9 671.0 662.8 667.7 655.8 664.8C648.8 662.0 641.8 659.1 635.8 656.4C629.8 653.8 625.3 651.6 619.9 649.2C614.6 646.8 608.3 644.4 603.5 642.3C598.7 640.1 594.7 638.3 591.2 636.4C587.6 634.5 584.4 632.5 582.2 630.8C579.9 629.2 578.6 627.9 577.5 626.4C576.4 625.0 575.6 623.7 575.5 622.4C575.3 621.1 575.6 620.0 576.4 618.9C577.2 617.9 579.4 616.6 580.0 616.1L579.5 616.3C578.9 616.9 576.4 618.3 575.5 619.5C574.6 620.7 574.2 622.0 574.4 623.4C574.5 624.8 575.4 626.4 576.5 627.9C577.7 629.4 579.0 630.7 581.3 632.4C583.7 634.2 586.9 636.2 590.4 638.2C594.0 640.1 598.0 641.8 602.8 644.0C607.6 646.1 613.8 648.5 619.2 650.9C624.5 653.2 629.1 655.4 635.0 658.0C641.0 660.6 648.1 663.6 655.0 666.4C662.0 669.2 670.2 672.6 676.9 675.0C683.7 677.5 686.9 678.6 695.7 681.2C704.4 683.8 718.9 688.2 729.4 690.7C739.9 693.1 750.6 694.6 758.5 695.8C766.4 696.9 770.4 697.4 776.9 697.6C783.4 697.8 791.1 697.7 797.3 697.2C803.6 696.7 807.8 695.8 814.5 694.7C821.1 693.5 829.3 691.8 837.1 690.3C844.9 688.7 850.3 687.9 861.0 685.5C871.7 683.0 861.4 685.3 901.5 675.3C941.6 665.3 1028.2 643.7 1101.5 625.5C1174.8 607.2 1276.4 581.8 1341.5 565.6C1406.6 549.4 1463.4 535.5 1492.0 528.5C1520.6 521.5 1505.9 525.4 1512.9 523.4C1519.9 521.3 1526.9 518.6 1533.8 516.1C1540.8 513.7 1548.3 511.5 1554.6 508.8C1560.9 506.0 1566.8 503.1 1571.4 499.9C1576.1 496.8 1579.3 493.4 1582.5 489.9C1585.8 486.3 1588.6 482.8 1591.0 478.7C1593.5 474.6 1595.9 469.8 1597.2 465.3C1598.5 460.9 1598.9 456.6 1598.7 452.0C1598.4 447.4 1596.2 440.2 1595.8 437.8Z" fill="rgb(207, 54, 52)"/>
<path d="M1595.7 437.8C1596.2 440.2 1598.3 447.4 1598.6 452.0C1598.8 456.6 1598.4 460.9 1597.1 465.3C1595.8 469.7 1593.4 474.5 1590.9 478.6C1588.5 482.7 1585.7 486.2 1582.4 489.7C1579.1 493.2 1576.0 496.5 1571.3 499.6C1566.7 502.8 1560.8 505.8 1554.5 508.5C1548.3 511.2 1540.7 513.5 1533.8 515.9C1526.8 518.3 1519.8 521.0 1512.8 523.1C1505.8 525.1 1520.5 521.2 1491.9 528.2C1463.4 535.2 1406.5 549.1 1341.4 565.3C1276.4 581.4 1174.8 606.8 1101.4 625.1C1028.1 643.4 941.5 665.0 901.4 675.0C861.4 685.0 871.7 682.6 861.0 685.1C850.2 687.6 844.9 688.4 837.2 689.9C829.4 691.4 821.2 693.1 814.6 694.2C808.0 695.4 803.7 696.3 797.5 696.8C791.2 697.2 783.5 697.4 777.0 697.2C770.6 696.9 766.5 696.5 758.6 695.3C750.7 694.2 740.0 692.6 729.6 690.2C719.1 687.8 704.6 683.4 695.8 680.8C687.1 678.2 683.9 677.1 677.1 674.6C670.4 672.1 662.2 668.8 655.2 666.0C648.3 663.2 641.2 660.2 635.2 657.6C629.3 655.0 624.7 652.8 619.4 650.4C614.0 648.1 607.8 645.6 603.0 643.5C598.2 641.4 594.2 639.6 590.6 637.7C587.1 635.8 583.9 633.7 581.6 632.0C579.2 630.3 577.9 629.0 576.8 627.5C575.6 626.0 574.8 624.5 574.7 623.1C574.5 621.8 574.9 620.5 575.7 619.3C576.6 618.2 579.0 616.8 579.7 616.3L579.4 616.4C578.7 616.9 576.2 618.4 575.3 619.6C574.4 620.9 574.0 622.2 574.1 623.6C574.3 625.1 575.1 626.7 576.2 628.3C577.4 629.8 578.8 631.2 581.1 632.9C583.4 634.7 586.6 636.8 590.2 638.8C593.7 640.8 597.7 642.5 602.5 644.7C607.2 646.8 613.4 649.2 618.8 651.6C624.2 653.9 628.7 656.2 634.7 658.8C640.7 661.3 647.7 664.3 654.7 667.1C661.7 670.0 669.8 673.3 676.6 675.8C683.4 678.2 686.6 679.3 695.4 681.9C704.1 684.5 718.7 689.0 729.1 691.4C739.6 693.9 750.3 695.4 758.2 696.5C766.1 697.7 770.2 698.1 776.7 698.3C783.2 698.6 790.8 698.4 797.1 698.0C803.3 697.5 807.5 696.7 814.2 695.6C820.9 694.5 829.2 692.8 837.0 691.3C844.8 689.7 850.3 688.9 861.1 686.4C871.9 683.9 861.6 686.3 901.7 676.2C941.8 666.2 1028.3 644.7 1101.7 626.4C1175.0 608.1 1276.6 582.6 1341.7 566.5C1406.8 550.3 1463.6 536.4 1492.2 529.4C1520.8 522.3 1506.2 526.2 1513.1 524.1C1520.1 522.0 1527.1 519.3 1534.1 516.8C1541.0 514.4 1548.6 512.2 1554.8 509.4C1561.1 506.7 1567.0 503.8 1571.7 500.6C1576.3 497.4 1579.5 493.8 1582.8 490.2C1586.1 486.6 1588.9 483.0 1591.3 478.9C1593.7 474.8 1596.2 469.9 1597.4 465.4C1598.7 460.9 1599.1 456.6 1598.9 452.0C1598.6 447.4 1596.4 440.2 1595.9 437.9Z" fill="rgb(179, 39, 40)"/>
<path d="M1595.8 437.9C1596.3 440.2 1598.5 447.4 1598.8 452.0C1599.0 456.6 1598.6 460.9 1597.3 465.4C1596.1 469.8 1593.6 474.7 1591.2 478.8C1588.8 482.9 1586.0 486.5 1582.7 490.1C1579.4 493.7 1576.2 497.2 1571.6 500.3C1566.9 503.5 1561.0 506.5 1554.7 509.2C1548.5 511.9 1541.0 514.1 1534.0 516.6C1527.1 519.0 1520.0 521.7 1513.0 523.8C1506.1 525.9 1520.7 522.0 1492.1 529.0C1463.6 536.1 1406.7 550.0 1341.6 566.2C1276.5 582.3 1174.9 607.7 1101.6 626.0C1028.3 644.3 941.7 665.9 901.6 675.9C861.5 685.9 871.8 683.6 861.1 686.1C850.3 688.6 844.8 689.4 837.0 690.9C829.2 692.4 820.9 694.1 814.3 695.3C807.7 696.4 803.4 697.2 797.2 697.7C790.9 698.2 783.2 698.3 776.8 698.1C770.3 697.8 766.2 697.4 758.3 696.3C750.4 695.1 739.7 693.6 729.2 691.1C718.8 688.7 704.2 684.3 695.5 681.7C686.7 679.1 683.5 678.0 676.7 675.5C669.9 673.0 661.8 669.7 654.8 666.9C647.8 664.0 640.8 661.1 634.8 658.5C628.8 655.9 624.3 653.7 618.9 651.3C613.6 649.0 607.4 646.5 602.6 644.4C597.8 642.3 593.8 640.5 590.3 638.6C586.7 636.6 583.5 634.5 581.2 632.8C578.9 631.0 577.5 629.7 576.3 628.1C575.2 626.6 574.4 625.0 574.2 623.6C574.0 622.1 574.5 620.8 575.4 619.6C576.2 618.4 578.8 616.9 579.5 616.4L579.3 616.4C578.6 617.0 576.0 618.5 575.1 619.8C574.1 621.0 573.7 622.4 573.8 623.9C574.0 625.4 574.8 627.1 576.0 628.7C577.1 630.3 578.5 631.7 580.8 633.5C583.1 635.3 586.3 637.5 589.9 639.5C593.5 641.4 597.4 643.2 602.2 645.4C606.9 647.5 613.1 650.0 618.5 652.3C623.8 654.7 628.4 656.9 634.4 659.5C640.3 662.1 647.4 665.0 654.4 667.8C661.3 670.7 669.5 674.0 676.3 676.5C683.1 678.9 686.3 680.0 695.1 682.6C703.8 685.2 718.4 689.7 728.9 692.2C739.3 694.6 750.0 696.1 757.9 697.3C765.9 698.4 770.0 698.8 776.5 699.1C783.0 699.3 790.6 699.2 796.8 698.8C803.0 698.3 807.2 697.6 813.9 696.6C820.6 695.5 829.0 693.8 836.9 692.3C844.7 690.8 850.4 689.9 861.2 687.4C872.1 684.9 861.7 687.2 901.8 677.2C941.9 667.2 1028.5 645.6 1101.8 627.3C1175.2 609.0 1276.7 583.5 1341.8 567.4C1406.9 551.2 1463.9 537.3 1492.4 530.2C1521.0 523.1 1506.4 526.9 1513.4 524.8C1520.3 522.7 1527.4 520.0 1534.3 517.5C1541.3 515.1 1548.8 512.8 1555.1 510.1C1561.3 507.4 1567.2 504.5 1571.9 501.3C1576.6 498.0 1579.8 494.2 1583.1 490.6C1586.4 486.9 1589.1 483.3 1591.6 479.1C1594.0 474.9 1596.4 470.0 1597.7 465.5C1598.9 461.0 1599.3 456.6 1599.1 452.0C1598.8 447.4 1596.5 440.3 1596.0 438.0Z" fill="rgb(157, 34, 35)"/>
<path d="M1596.0 437.9C1596.5 440.3 1598.7 447.4 1599.0 452.0C1599.3 456.6 1598.8 460.9 1597.6 465.4C1596.3 470.0 1593.9 474.9 1591.5 479.0C1589.0 483.2 1586.3 486.8 1583.0 490.4C1579.7 494.1 1576.5 497.8 1571.8 501.0C1567.1 504.3 1561.2 507.2 1555.0 509.9C1548.7 512.6 1541.2 514.8 1534.2 517.3C1527.3 519.7 1520.3 522.5 1513.3 524.6C1506.3 526.7 1520.9 522.8 1492.4 529.9C1463.8 537.0 1406.9 550.9 1341.8 567.0C1276.7 583.2 1175.1 608.7 1101.8 627.0C1028.4 645.3 941.9 666.8 901.8 676.8C861.7 686.9 872.0 684.5 861.2 687.0C850.4 689.6 844.8 690.4 836.9 691.9C829.0 693.4 820.7 695.1 814.0 696.2C807.4 697.3 803.1 698.0 796.9 698.5C790.7 698.9 783.0 699.0 776.6 698.8C770.1 698.5 766.0 698.1 758.0 697.0C750.1 695.9 739.4 694.3 729.0 691.9C718.5 689.5 703.9 685.0 695.2 682.4C686.4 679.8 683.2 678.7 676.4 676.2C669.6 673.8 661.5 670.4 654.5 667.6C647.5 664.7 640.5 661.8 634.5 659.2C628.5 656.6 623.9 654.4 618.6 652.1C613.2 649.7 607.0 647.3 602.3 645.1C597.5 643.0 593.6 641.2 590.0 639.2C586.4 637.2 583.2 635.1 580.9 633.3C578.6 631.5 577.2 630.1 576.1 628.5C574.9 626.9 574.1 625.3 573.9 623.8C573.8 622.3 574.2 621.0 575.1 619.7C576.0 618.5 578.7 617.0 579.4 616.4L579.2 616.5C578.5 617.1 575.8 618.7 574.8 619.9C573.9 621.2 573.4 622.6 573.6 624.1C573.7 625.7 574.5 627.4 575.7 629.1C576.8 630.7 578.2 632.1 580.6 634.0C582.9 635.8 586.1 638.1 589.6 640.1C593.2 642.1 597.1 643.9 601.8 646.1C606.6 648.2 612.7 650.7 618.1 653.1C623.5 655.4 628.0 657.6 634.0 660.2C640.0 662.8 647.0 665.7 654.0 668.5C661.0 671.4 669.2 674.7 676.0 677.2C682.7 679.7 686.0 680.7 694.8 683.3C703.5 685.9 718.1 690.5 728.6 692.9C739.1 695.4 749.7 696.9 757.6 698.0C765.6 699.2 769.8 699.5 776.3 699.8C782.8 700.0 790.3 699.9 796.5 699.6C802.8 699.2 807.0 698.5 813.6 697.5C820.3 696.5 828.8 694.8 836.7 693.3C844.7 691.8 850.5 690.9 861.3 688.4C872.2 685.8 861.9 688.2 902.0 678.1C942.1 668.1 1028.7 646.5 1102.0 628.2C1175.3 609.9 1276.9 584.4 1342.0 568.2C1407.1 552.0 1464.1 538.2 1492.7 531.1C1521.3 524.0 1506.6 527.7 1513.6 525.6C1520.6 523.4 1527.6 520.7 1534.6 518.2C1541.5 515.7 1549.0 513.5 1555.3 510.8C1561.6 508.1 1567.4 505.3 1572.1 501.9C1576.8 498.6 1580.1 494.7 1583.3 490.9C1586.6 487.1 1589.4 483.5 1591.8 479.3C1594.3 475.1 1596.7 470.1 1597.9 465.6C1599.1 461.0 1599.6 456.6 1599.3 452.0C1599.0 447.4 1596.6 440.4 1596.1 438.1Z" fill="rgb(146, 31, 33)"/>
<path d="M1596.1 438.0C1596.6 440.4 1598.9 447.4 1599.2 452.0C1599.5 456.6 1599.0 461.0 1597.8 465.5C1596.6 470.1 1594.2 475.0 1591.8 479.2C1589.3 483.4 1586.5 487.0 1583.3 490.8C1580.0 494.5 1576.7 498.4 1572.0 501.7C1567.4 505.0 1561.5 507.9 1555.2 510.6C1549.0 513.3 1541.4 515.5 1534.5 518.0C1527.5 520.4 1520.5 523.2 1513.5 525.3C1506.5 527.4 1521.2 523.7 1492.6 530.8C1464.0 537.9 1407.0 551.7 1341.9 567.9C1276.8 584.1 1175.3 609.6 1101.9 627.9C1028.6 646.2 942.0 667.8 901.9 677.8C861.8 687.8 872.2 685.5 861.3 688.0C850.4 690.5 844.7 691.4 836.8 692.9C828.9 694.4 820.4 696.1 813.7 697.2C807.1 698.2 802.9 698.9 796.6 699.3C790.4 699.7 782.8 699.8 776.3 699.5C769.9 699.3 765.7 698.9 757.7 697.7C749.8 696.6 739.2 695.1 728.7 692.7C718.2 690.2 703.7 685.7 694.9 683.1C686.1 680.4 682.9 679.4 676.1 676.9C669.3 674.5 661.1 671.1 654.1 668.3C647.2 665.5 640.1 662.5 634.1 659.9C628.2 657.4 623.6 655.2 618.2 652.8C612.9 650.4 606.7 648.0 602.0 645.8C597.2 643.7 593.3 641.9 589.7 639.9C586.2 637.9 583.0 635.6 580.7 633.8C578.3 632.0 576.9 630.5 575.8 628.9C574.6 627.3 573.8 625.6 573.7 624.0C573.5 622.5 574.0 621.1 574.9 619.9C575.8 618.6 578.5 617.0 579.2 616.5L579.1 616.5C578.3 617.1 575.6 618.8 574.6 620.1C573.7 621.4 573.2 622.8 573.3 624.4C573.5 625.9 574.2 627.8 575.4 629.5C576.6 631.2 578.0 632.6 580.3 634.5C582.6 636.3 585.8 638.7 589.4 640.8C592.9 642.8 596.8 644.6 601.5 646.8C606.3 649.0 612.4 651.5 617.8 653.8C623.1 656.2 627.7 658.3 633.7 660.9C639.7 663.5 646.7 666.4 653.7 669.3C660.7 672.1 668.8 675.5 675.6 677.9C682.4 680.4 685.7 681.4 694.5 684.0C703.3 686.6 717.8 691.2 728.3 693.7C738.8 696.2 749.4 697.6 757.4 698.8C765.3 699.9 769.6 700.3 776.1 700.5C782.5 700.8 790.1 700.7 796.3 700.3C802.5 700.0 806.7 699.5 813.4 698.5C820.1 697.4 828.6 695.8 836.6 694.3C844.6 692.8 850.5 691.9 861.4 689.3C872.4 686.8 862.0 689.1 902.2 679.1C942.3 669.0 1028.8 647.4 1102.2 629.1C1175.5 610.8 1277.0 585.3 1342.2 569.1C1407.3 552.9 1464.3 539.1 1492.9 531.9C1521.5 524.8 1506.8 528.5 1513.8 526.3C1520.8 524.1 1527.9 521.3 1534.8 518.9C1541.8 516.4 1549.3 514.2 1555.5 511.5C1561.8 508.8 1567.7 506.0 1572.4 502.6C1577.0 499.2 1580.3 495.1 1583.6 491.2C1586.9 487.4 1589.7 483.8 1592.1 479.5C1594.5 475.2 1596.9 470.2 1598.1 465.6C1599.3 461.0 1599.8 456.6 1599.5 452.0C1599.2 447.4 1596.8 440.4 1596.2 438.1Z" fill="rgb(140, 29, 31)"/>
<path d="M1596.2 438.1C1596.7 440.4 1599.1 447.4 1599.4 452.0C1599.7 456.6 1599.3 461.0 1598.0 465.6C1596.8 470.2 1594.4 475.2 1592.0 479.4C1589.6 483.7 1586.8 487.3 1583.5 491.1C1580.2 494.9 1577.0 499.0 1572.3 502.4C1567.6 505.7 1561.7 508.6 1555.4 511.3C1549.2 514.0 1541.7 516.2 1534.7 518.6C1527.8 521.1 1520.7 523.9 1513.7 526.0C1506.8 528.2 1521.4 524.5 1492.8 531.6C1464.2 538.7 1407.2 552.6 1342.1 568.8C1277.0 585.0 1175.4 610.5 1102.1 628.8C1028.8 647.1 942.2 668.7 902.1 678.7C862.0 688.8 872.3 686.5 861.4 689.0C850.5 691.5 844.6 692.4 836.7 693.9C828.7 695.4 820.2 697.1 813.5 698.1C806.8 699.1 802.6 699.7 796.4 700.1C790.2 700.4 782.6 700.5 776.1 700.3C769.6 700.0 765.4 699.6 757.5 698.5C749.5 697.4 738.9 695.9 728.4 693.4C717.9 691.0 703.4 686.4 694.6 683.8C685.8 681.1 682.5 680.1 675.7 677.7C668.9 675.2 660.8 671.8 653.8 669.0C646.8 666.2 639.8 663.2 633.8 660.7C627.8 658.1 623.2 655.9 617.9 653.5C612.5 651.2 606.4 648.7 601.7 646.5C596.9 644.4 593.0 642.6 589.5 640.5C585.9 638.5 582.7 636.1 580.4 634.3C578.1 632.4 576.7 631.0 575.5 629.3C574.3 627.7 573.5 625.8 573.4 624.3C573.3 622.7 573.7 621.3 574.7 620.0C575.6 618.7 578.4 617.1 579.1 616.5L579.0 616.6C578.2 617.2 575.4 618.9 574.4 620.2C573.4 621.6 572.9 623.0 573.1 624.6C573.2 626.2 574.0 628.2 575.1 629.9C576.3 631.6 577.7 633.1 580.0 635.0C582.4 636.9 585.6 639.3 589.1 641.4C592.6 643.5 596.5 645.3 601.2 647.5C606.0 649.7 612.0 652.2 617.4 654.5C622.8 656.9 627.4 659.1 633.4 661.6C639.3 664.2 646.4 667.1 653.4 670.0C660.3 672.8 668.5 676.2 675.3 678.6C682.1 681.1 685.4 682.1 694.2 684.7C703.0 687.4 717.6 692.0 728.1 694.5C738.5 696.9 749.1 698.4 757.1 699.5C765.1 700.6 769.4 701.0 775.8 701.3C782.3 701.5 789.8 701.4 796.0 701.1C802.2 700.8 806.4 700.4 813.1 699.4C819.8 698.4 828.4 696.8 836.5 695.3C844.6 693.8 850.6 692.9 861.6 690.3C872.5 687.8 862.2 690.1 902.3 680.0C942.5 670.0 1029.0 648.4 1102.3 630.0C1175.7 611.7 1277.2 586.2 1342.3 570.0C1407.5 553.8 1464.5 539.9 1493.1 532.8C1521.7 525.6 1507.1 529.2 1514.1 527.0C1521.1 524.8 1528.1 522.0 1535.0 519.6C1542.0 517.1 1549.5 514.9 1555.8 512.2C1562.0 509.5 1567.9 506.7 1572.6 503.3C1577.3 499.9 1580.6 495.5 1583.9 491.6C1587.2 487.7 1590.0 484.0 1592.4 479.7C1594.8 475.4 1597.1 470.3 1598.4 465.7C1599.6 461.1 1600.0 456.6 1599.7 452.0C1599.3 447.4 1596.9 440.5 1596.3 438.2Z" fill="rgb(134, 27, 30)"/>
<path d="M1596.3 438.2C1596.8 440.5 1599.3 447.4 1599.6 452.0C1599.9 456.6 1599.5 461.1 1598.3 465.7C1597.1 470.3 1594.7 475.3 1592.3 479.6C1589.9 483.9 1587.1 487.6 1583.8 491.5C1580.5 495.4 1577.2 499.6 1572.5 503.0C1567.8 506.5 1561.9 509.3 1555.7 512.0C1549.4 514.7 1541.9 516.9 1535.0 519.3C1528.0 521.8 1521.0 524.6 1514.0 526.8C1507.0 529.0 1521.6 525.3 1493.0 532.5C1464.4 539.6 1407.4 553.5 1342.3 569.7C1277.1 585.9 1175.6 611.4 1102.3 629.7C1028.9 648.0 942.4 669.6 902.3 679.7C862.1 689.7 872.5 687.4 861.5 690.0C850.6 692.5 844.6 693.4 836.5 694.9C828.5 696.4 819.9 698.1 813.2 699.1C806.5 700.0 802.3 700.5 796.1 700.9C789.9 701.2 782.4 701.3 775.9 701.0C769.4 700.7 765.2 700.4 757.2 699.2C749.2 698.1 738.6 696.6 728.2 694.2C717.7 691.7 703.1 687.1 694.3 684.5C685.5 681.8 682.2 680.8 675.4 678.4C668.6 675.9 660.5 672.5 653.5 669.7C646.5 666.9 639.5 663.9 633.5 661.4C627.5 658.8 622.9 656.6 617.5 654.3C612.2 651.9 606.1 649.4 601.3 647.2C596.6 645.0 592.7 643.2 589.2 641.2C585.7 639.1 582.5 636.7 580.1 634.8C577.8 632.9 576.4 631.4 575.2 629.7C574.1 628.0 573.3 626.1 573.2 624.5C573.0 622.9 573.5 621.5 574.5 620.2C575.4 618.8 578.3 617.2 579.0 616.6L578.9 616.6C578.1 617.3 575.2 619.0 574.2 620.4C573.2 621.7 572.7 623.2 572.8 624.9C572.9 626.5 573.7 628.5 574.8 630.3C576.0 632.1 577.5 633.5 579.8 635.5C582.1 637.4 585.3 639.9 588.8 642.1C592.3 644.2 596.2 646.0 600.9 648.2C605.6 650.4 611.7 652.9 617.1 655.3C622.4 657.6 627.0 659.8 633.0 662.3C639.0 664.9 646.0 667.8 653.0 670.7C660.0 673.5 668.2 676.9 675.0 679.3C681.8 681.8 685.1 682.8 693.9 685.4C702.7 688.1 717.3 692.7 727.8 695.2C738.3 697.7 748.9 699.1 756.8 700.3C764.8 701.4 769.1 701.7 775.6 702.0C782.1 702.3 789.6 702.2 795.8 701.9C802.0 701.7 806.1 701.3 812.8 700.4C819.6 699.4 828.2 697.8 836.4 696.3C844.5 694.8 850.6 693.8 861.7 691.3C872.7 688.7 862.4 691.0 902.5 681.0C942.6 670.9 1029.2 649.3 1102.5 631.0C1175.8 612.6 1277.4 587.1 1342.5 570.9C1407.6 554.6 1464.7 540.8 1493.3 533.6C1522.0 526.5 1507.3 530.0 1514.3 527.8C1521.3 525.6 1528.3 522.7 1535.3 520.2C1542.2 517.8 1549.7 515.6 1556.0 512.9C1562.3 510.2 1568.1 507.5 1572.8 504.0C1577.5 500.5 1580.9 496.0 1584.2 491.9C1587.5 487.9 1590.3 484.3 1592.7 479.9C1595.1 475.5 1597.4 470.4 1598.6 465.8C1599.8 461.1 1600.2 456.6 1599.9 452.0C1599.5 447.4 1597.0 440.6 1596.5 438.3Z" fill="rgb(128, 25, 28)"/>
<path d="M1596.4 438.2C1597.0 440.5 1599.5 447.4 1599.8 452.0C1600.2 456.6 1599.7 461.1 1598.5 465.7C1597.3 470.4 1595.0 475.5 1592.6 479.8C1590.2 484.2 1587.4 487.8 1584.1 491.8C1580.8 495.8 1577.4 500.3 1572.7 503.7C1568.0 507.2 1562.2 510.0 1555.9 512.7C1549.7 515.4 1542.1 517.5 1535.2 520.0C1528.2 522.5 1521.2 525.3 1514.2 527.5C1507.2 529.7 1521.9 526.2 1493.3 533.3C1464.6 540.5 1407.6 554.3 1342.4 570.6C1277.3 586.8 1175.8 612.3 1102.4 630.6C1029.1 649.0 942.6 670.6 902.4 680.6C862.3 690.7 872.6 688.4 861.6 690.9C850.6 693.5 844.5 694.4 836.4 695.9C828.3 697.4 819.7 699.1 812.9 700.0C806.2 701.0 802.1 701.4 795.9 701.6C789.7 701.9 782.2 702.0 775.7 701.7C769.2 701.5 764.9 701.1 756.9 700.0C749.0 698.9 738.4 697.4 727.9 694.9C717.4 692.5 702.8 687.8 694.0 685.2C685.2 682.5 681.9 681.5 675.1 679.1C668.3 676.6 660.1 673.2 653.1 670.4C646.1 667.6 639.1 664.7 633.1 662.1C627.1 659.5 622.5 657.4 617.2 655.0C611.8 652.7 605.7 650.1 601.0 647.9C596.3 645.7 592.4 643.9 588.9 641.8C585.4 639.7 582.2 637.2 579.9 635.3C577.5 633.4 576.1 631.9 574.9 630.1C573.8 628.4 573.0 626.4 572.9 624.8C572.8 623.1 573.2 621.7 574.2 620.3C575.2 619.0 578.1 617.2 578.9 616.6L578.7 616.7C577.9 617.3 575.0 619.1 573.9 620.5C572.9 621.9 572.4 623.4 572.5 625.1C572.6 626.8 573.4 628.9 574.6 630.7C575.7 632.5 577.2 634.0 579.5 636.0C581.9 638.0 585.0 640.5 588.5 642.7C592.1 644.9 595.9 646.7 600.6 648.9C605.3 651.1 611.4 653.7 616.7 656.0C622.0 658.4 626.7 660.5 632.7 663.1C638.7 665.6 645.7 668.5 652.7 671.4C659.7 674.2 667.8 677.6 674.7 680.1C681.5 682.5 684.8 683.5 693.6 686.1C702.4 688.8 717.0 693.5 727.5 696.0C738.0 698.5 748.6 699.9 756.5 701.0C764.5 702.1 768.9 702.4 775.4 702.7C781.9 703.0 789.3 703.0 795.5 702.7C801.7 702.5 805.8 702.2 812.5 701.3C819.3 700.4 828.0 698.8 836.2 697.3C844.4 695.8 850.7 694.8 861.8 692.3C872.8 689.7 862.5 692.0 902.7 681.9C942.8 671.8 1029.3 650.2 1102.7 631.9C1176.0 613.5 1277.5 588.0 1342.7 571.7C1407.8 555.5 1464.9 541.7 1493.6 534.5C1522.2 527.3 1507.5 530.8 1514.5 528.5C1521.5 526.3 1528.6 523.4 1535.5 520.9C1542.5 518.4 1550.0 516.3 1556.2 513.6C1562.5 510.9 1568.3 508.2 1573.0 504.6C1577.7 501.1 1581.1 496.4 1584.5 492.3C1587.8 488.2 1590.6 484.5 1593.0 480.1C1595.3 475.7 1597.6 470.5 1598.8 465.9C1600.0 461.2 1600.5 456.6 1600.1 452.0C1599.7 447.4 1597.2 440.6 1596.6 438.4Z" fill="rgb(123, 23, 26)"/>
<path d="M1596.5 438.3C1597.1 440.6 1599.6 447.4 1600.0 452.0C1600.4 456.6 1599.9 461.2 1598.7 465.8C1597.6 470.5 1595.3 475.6 1592.9 480.0C1590.5 484.4 1587.7 488.1 1584.4 492.2C1581.0 496.2 1577.7 500.9 1573.0 504.4C1568.3 507.9 1562.4 510.6 1556.1 513.4C1549.9 516.1 1542.4 518.2 1535.4 520.7C1528.5 523.2 1521.4 526.0 1514.4 528.3C1507.5 530.5 1522.1 527.0 1493.5 534.2C1464.8 541.4 1407.8 555.2 1342.6 571.4C1277.5 587.7 1175.9 613.2 1102.6 631.5C1029.3 649.9 942.8 671.5 902.6 681.6C862.5 691.6 872.8 689.3 861.7 691.9C850.7 694.5 844.5 695.4 836.3 696.9C828.1 698.4 819.4 700.0 812.6 701.0C805.9 701.9 801.8 702.2 795.6 702.4C789.4 702.7 782.0 702.7 775.5 702.5C769.0 702.2 764.6 701.9 756.6 700.7C748.7 699.6 738.1 698.2 727.6 695.7C717.1 693.2 702.5 688.5 693.7 685.9C684.9 683.2 681.6 682.3 674.8 679.8C668.0 677.4 659.8 674.0 652.8 671.1C645.8 668.3 638.8 665.4 632.8 662.8C626.8 660.2 622.2 658.1 616.8 655.8C611.5 653.4 605.4 650.9 600.7 648.6C596.0 646.4 592.2 644.6 588.6 642.5C585.1 640.3 581.9 637.8 579.6 635.8C577.3 633.8 575.8 632.3 574.7 630.5C573.5 628.7 572.7 626.7 572.6 625.0C572.5 623.3 573.0 621.8 574.0 620.5C575.0 619.1 578.0 617.3 578.8 616.7L578.6 616.8C577.8 617.4 574.8 619.2 573.7 620.7C572.7 622.1 572.2 623.6 572.3 625.4C572.4 627.1 573.1 629.2 574.3 631.1C575.4 633.0 576.9 634.5 579.3 636.5C581.6 638.5 584.8 641.2 588.3 643.4C591.8 645.5 595.6 647.4 600.3 649.6C605.0 651.8 611.0 654.4 616.4 656.8C621.7 659.1 626.3 661.2 632.3 663.8C638.3 666.3 645.3 669.3 652.3 672.1C659.3 674.9 667.5 678.3 674.3 680.8C681.2 683.2 684.5 684.1 693.3 686.8C702.1 689.5 716.8 694.2 727.3 696.7C737.8 699.2 748.3 700.6 756.3 701.8C764.3 702.9 768.7 703.2 775.2 703.5C781.7 703.8 789.1 703.7 795.3 703.5C801.4 703.3 805.5 703.1 812.3 702.2C819.1 701.4 827.9 699.8 836.1 698.3C844.4 696.8 850.8 695.8 861.9 693.2C873.0 690.7 862.7 692.9 902.8 682.9C943.0 672.8 1029.5 651.2 1102.8 632.8C1176.2 614.4 1277.7 588.9 1342.8 572.6C1408.0 556.4 1465.1 542.6 1493.8 535.3C1522.4 528.1 1507.8 531.5 1514.8 529.3C1521.8 527.0 1528.8 524.1 1535.8 521.6C1542.7 519.1 1550.2 517.0 1556.5 514.3C1562.7 511.6 1568.6 508.9 1573.3 505.3C1578.0 501.7 1581.4 496.8 1584.7 492.6C1588.1 488.5 1590.8 484.8 1593.2 480.3C1595.6 475.8 1597.9 470.6 1599.1 465.9C1600.2 461.2 1600.7 456.6 1600.3 452.0C1599.9 447.4 1597.3 440.7 1596.7 438.4Z" fill="rgb(117, 21, 24)"/>
<path d="M1596.6 438.4C1597.2 440.7 1599.8 447.4 1600.2 452.0C1600.6 456.6 1600.2 461.2 1599.0 465.9C1597.8 470.6 1595.5 475.8 1593.1 480.2C1590.7 484.7 1587.9 488.4 1584.6 492.5C1581.3 496.7 1577.9 501.5 1573.2 505.1C1568.5 508.7 1562.6 511.3 1556.4 514.1C1550.1 516.8 1542.6 518.9 1535.7 521.4C1528.7 523.9 1521.7 526.7 1514.7 529.0C1507.7 531.3 1522.3 527.8 1493.7 535.0C1465.0 542.3 1407.9 556.1 1342.8 572.3C1277.6 588.5 1176.1 614.1 1102.8 632.5C1029.4 650.8 942.9 672.4 902.8 682.5C862.6 692.6 872.9 690.3 861.8 692.9C850.7 695.4 844.4 696.4 836.2 697.9C827.9 699.4 819.2 701.0 812.4 701.9C805.6 702.8 801.5 703.0 795.4 703.2C789.2 703.4 781.8 703.5 775.3 703.2C768.8 702.9 764.4 702.6 756.4 701.5C748.4 700.4 737.9 699.0 727.4 696.5C716.9 694.0 702.2 689.2 693.4 686.6C684.6 683.9 681.3 683.0 674.4 680.5C667.6 678.1 659.5 674.7 652.5 671.8C645.5 669.0 638.5 666.1 632.5 663.5C626.5 661.0 621.8 658.9 616.5 656.5C611.1 654.1 605.1 651.6 600.4 649.3C595.7 647.1 591.9 645.3 588.4 643.1C584.9 640.9 581.7 638.3 579.4 636.3C577.0 634.3 575.5 632.8 574.4 630.9C573.2 629.1 572.5 627.0 572.4 625.3C572.3 623.5 572.8 622.0 573.8 620.6C574.9 619.2 577.8 617.4 578.7 616.7L578.5 616.8C577.7 617.5 574.6 619.3 573.5 620.8C572.4 622.3 571.9 623.8 572.0 625.6C572.1 627.4 572.8 629.6 574.0 631.5C575.2 633.4 576.7 634.9 579.0 637.0C581.3 639.1 584.5 641.8 588.0 644.0C591.5 646.2 595.3 648.0 600.0 650.3C604.7 652.5 610.7 655.1 616.0 657.5C621.3 659.9 626.0 662.0 632.0 664.5C638.0 667.0 645.0 670.0 652.0 672.8C659.0 675.6 667.2 679.0 674.0 681.5C680.8 684.0 684.2 684.8 693.0 687.5C701.8 690.2 716.5 695.0 727.0 697.5C737.5 700.0 748.0 701.4 756.0 702.5C764.0 703.6 768.5 703.9 775.0 704.2C781.5 704.5 788.8 704.5 795.0 704.3C801.2 704.1 805.2 704.0 812.0 703.2C818.8 702.4 827.7 700.8 836.0 699.3C844.3 697.8 850.8 696.8 862.0 694.2C873.2 691.6 862.8 693.9 903.0 683.8C943.2 673.7 1029.7 652.1 1103.0 633.7C1176.3 615.3 1277.8 589.8 1343.0 573.5C1408.2 557.2 1465.3 543.5 1494.0 536.2C1522.7 529.0 1508.0 532.3 1515.0 530.0C1522.0 527.7 1529.0 524.8 1536.0 522.3C1543.0 519.8 1550.5 517.7 1556.7 515.0C1563.0 512.3 1568.8 509.7 1573.5 506.0C1578.2 502.3 1581.7 497.2 1585.0 493.0C1588.3 488.8 1591.1 485.0 1593.5 480.5C1595.9 476.0 1598.1 470.8 1599.3 466.0C1600.5 461.2 1600.9 456.6 1600.5 452.0C1600.1 447.4 1597.4 440.8 1596.8 438.5Z" fill="rgb(111, 19, 23)"/>
<path d="M777.8 694.6C774.7 694.3 767.5 693.9 759.6 692.7C751.7 691.5 740.9 689.9 730.5 687.5C720.0 685.1 705.6 680.9 696.9 678.4C688.2 675.8 685.0 674.6 678.3 672.1C671.5 669.6 663.4 666.3 656.4 663.5C649.5 660.7 642.4 657.7 636.4 655.1C630.5 652.5 626.0 650.2 620.6 647.8C615.2 645.4 609.0 642.9 604.2 640.8C599.3 638.7 595.3 636.9 591.8 635.0C588.2 633.1 584.4 630.4 582.9 629.5" fill="none" stroke="#fff" stroke-opacity="0.8" stroke-width="1" stroke-dasharray="3 4 9 2 2 3 1.500 30 2 3 6 40"/>
<path d="M582.7 615.0C583.7 614.8 584.7 614.4 588.9 613.9C593.1 613.4 598.3 612.6 607.7 611.8C617.1 611.0 635.4 609.6 645.2 608.9C655.0 608.2 659.2 608.4 666.7 607.5C674.2 606.6 682.8 604.9 690.0 603.5C697.2 602.1 698.3 601.7 710.0 599.2C721.7 596.7 743.3 592.0 760.0 588.3C776.7 584.5 790.0 581.4 810.0 576.7C830.0 572.0 831.7 571.5 880.0 560.0C928.3 548.5 1030.0 524.5 1100.0 508.0C1170.0 491.5 1258.3 470.9 1300.0 460.8C1341.7 450.7 1337.5 451.0 1350.0 447.5C1362.5 444.0 1366.7 442.8 1375.0 440.0C1383.3 437.2 1390.3 434.1 1400.0 430.8C1409.7 427.5 1422.2 423.2 1433.3 420.0C1444.4 416.8 1455.6 414.1 1466.7 411.7C1477.8 409.3 1490.3 407.1 1500.0 405.8C1509.7 404.6 1518.3 404.3 1525.0 404.2C1531.7 404.1 1535.8 404.7 1540.0 405.0C1544.2 405.3 1546.9 405.6 1550.4 406.2C1553.9 406.9 1557.3 408.0 1560.8 409.2C1564.3 410.4 1567.8 411.6 1571.2 413.3C1574.7 415.0 1578.6 417.1 1581.7 419.6C1584.8 422.1 1587.9 425.7 1590.0 428.3C1592.1 430.9 1593.5 433.9 1594.2 435.0L1594.5 437.0C1594.8 439.5 1596.4 447.4 1596.4 452.0C1596.4 456.6 1596.0 460.4 1594.6 464.5C1593.2 468.6 1590.5 472.9 1588.0 476.5C1585.5 480.1 1582.6 483.2 1579.5 486.0C1576.4 488.8 1573.7 490.6 1569.2 493.3C1564.7 496.1 1558.8 499.7 1552.5 502.5C1546.2 505.3 1538.7 507.6 1531.7 510.0C1524.8 512.4 1517.8 514.9 1510.8 516.7C1503.8 518.5 1518.5 514.0 1490.0 520.8C1461.5 527.6 1405.0 541.6 1340.0 557.7C1275.0 573.8 1173.3 599.0 1100.0 617.2C1026.7 635.4 940.0 656.9 900.0 666.8C860.0 676.7 870.3 674.4 860.0 676.7C849.7 679.0 845.4 679.2 838.3 680.5C831.2 681.8 823.8 683.2 817.5 684.2C811.2 685.2 807.0 686.1 800.8 686.5C794.5 686.9 786.4 687.1 780.0 686.8C773.6 686.5 770.3 686.0 762.5 684.8C754.7 683.6 743.7 681.8 733.3 679.5C722.9 677.2 708.6 673.5 700.0 671.0C691.4 668.5 688.4 667.0 681.7 664.5C675.0 662.0 667.0 658.8 660.0 656.0C653.0 653.2 646.0 650.2 640.0 647.5C634.0 644.8 629.7 642.5 624.3 640.0C618.9 637.5 612.6 634.9 607.7 632.7C602.9 630.5 598.7 628.6 595.2 626.8C591.7 625.0 588.8 623.2 586.8 621.8C584.8 620.4 583.9 619.3 583.0 618.5C582.1 617.7 581.8 617.3 581.5 616.8C581.2 616.3 581.3 615.9 581.5 615.6C581.7 615.3 582.5 615.1 582.7 615.0Z" fill="url(#surfg)"/>
<g clip-path="url(#surfclip)">
<polygon points="560,600 684,605 828,681 700,720 560,680" fill="#bf403f"/>
<polygon points="560,600 667,607.4 811,683.3 700,720 560,680" fill="#ab3134"/>
<polygon points="560,600 640,609.8 777,680.5 700,720 560,680" fill="#a12c2f"/>
<polygon points="560,600 616.7,611.7 743,676.7 700,720 560,680" fill="#94272a"/>
<path d="M616.7 611.7L743 676.7" stroke="#7c1b1e" stroke-width="1.1" fill="none"/>
<path d="M640 609.8L777 680.5" stroke="#bd4a49" stroke-width="0.9" fill="none" opacity=".8"/>
<path d="M667 607.4L811 683.3" stroke="#c9514e" stroke-width="1" fill="none" opacity=".7"/>
<polygon points="1355,448.3 1533,505 1620,520 1620,390 1400,390" fill="url(#tailg)"/>
</g>
<ellipse cx="743.3" cy="603.0" rx="13.41" ry="4.15" fill="url(#dotg)" transform="rotate(-1.5 743.3 603.0)"/>
<ellipse cx="772.2" cy="596.3" rx="13.31" ry="4.12" fill="url(#dotg)" transform="rotate(-1.5 772.2 596.3)"/>
<ellipse cx="800.9" cy="589.6" rx="13.21" ry="4.09" fill="url(#dotg)" transform="rotate(-1.5 800.9 589.6)"/>
<ellipse cx="829.3" cy="582.9" rx="13.10" ry="4.06" fill="url(#dotg)" transform="rotate(-1.5 829.3 582.9)"/>
<ellipse cx="857.6" cy="576.3" rx="13.00" ry="4.03" fill="url(#dotg)" transform="rotate(-1.5 857.6 576.3)"/>
<ellipse cx="885.6" cy="569.8" rx="12.90" ry="4.00" fill="url(#dotg)" transform="rotate(-1.5 885.6 569.8)"/>
<ellipse cx="913.4" cy="563.3" rx="12.80" ry="3.97" fill="url(#dotg)" transform="rotate(-1.5 913.4 563.3)"/>
<ellipse cx="940.9" cy="556.8" rx="12.71" ry="3.94" fill="url(#dotg)" transform="rotate(-1.5 940.9 556.8)"/>
<ellipse cx="968.3" cy="550.5" rx="12.61" ry="3.91" fill="url(#dotg)" transform="rotate(-1.5 968.3 550.5)"/>
<ellipse cx="995.5" cy="544.1" rx="12.51" ry="3.88" fill="url(#dotg)" transform="rotate(-1.5 995.5 544.1)"/>
<ellipse cx="1022.5" cy="537.8" rx="12.42" ry="3.85" fill="url(#dotg)" transform="rotate(-1.5 1022.5 537.8)"/>
<ellipse cx="1049.2" cy="531.6" rx="12.33" ry="3.82" fill="url(#dotg)" transform="rotate(-1.5 1049.2 531.6)"/>
<ellipse cx="1075.8" cy="525.4" rx="12.24" ry="3.79" fill="url(#dotg)" transform="rotate(-1.5 1075.8 525.4)"/>
<ellipse cx="1102.1" cy="519.2" rx="12.14" ry="3.76" fill="url(#dotg)" transform="rotate(-1.5 1102.1 519.2)"/>
<ellipse cx="1128.3" cy="513.1" rx="12.05" ry="3.73" fill="url(#dotg)" transform="rotate(-1.5 1128.3 513.1)"/>
<ellipse cx="1154.3" cy="507.0" rx="11.97" ry="3.71" fill="url(#dotg)" transform="rotate(-1.5 1154.3 507.0)"/>
<ellipse cx="1180.0" cy="501.0" rx="11.88" ry="3.68" fill="url(#dotg)" transform="rotate(-1.5 1180.0 501.0)"/>
<ellipse cx="1205.6" cy="495.0" rx="11.79" ry="3.65" fill="url(#dotg)" transform="rotate(-1.5 1205.6 495.0)"/>
<ellipse cx="1231.0" cy="489.1" rx="11.70" ry="3.63" fill="url(#dotg)" transform="rotate(-1.5 1231.0 489.1)"/>
<ellipse cx="1256.2" cy="483.2" rx="11.62" ry="3.60" fill="url(#dotg)" transform="rotate(-1.5 1256.2 483.2)"/>
<ellipse cx="1281.3" cy="477.4" rx="11.53" ry="3.57" fill="url(#dotg)" transform="rotate(-1.5 1281.3 477.4)"/>
<ellipse cx="1306.1" cy="471.6" rx="11.45" ry="3.55" fill="url(#dotg)" transform="rotate(-1.5 1306.1 471.6)"/>
<ellipse cx="1330.8" cy="465.8" rx="11.37" ry="3.52" fill="url(#dotg)" transform="rotate(-1.5 1330.8 465.8)"/>
<ellipse cx="763.4" cy="612.4" rx="13.46" ry="4.17" fill="url(#dotg)" transform="rotate(-1.5 763.4 612.4)"/>
<ellipse cx="792.4" cy="605.6" rx="13.36" ry="4.14" fill="url(#dotg)" transform="rotate(-1.5 792.4 605.6)"/>
<ellipse cx="821.2" cy="598.8" rx="13.25" ry="4.11" fill="url(#dotg)" transform="rotate(-1.5 821.2 598.8)"/>
<ellipse cx="849.8" cy="592.1" rx="13.15" ry="4.07" fill="url(#dotg)" transform="rotate(-1.5 849.8 592.1)"/>
<ellipse cx="878.1" cy="585.4" rx="13.05" ry="4.04" fill="url(#dotg)" transform="rotate(-1.5 878.1 585.4)"/>
<ellipse cx="906.2" cy="578.8" rx="12.95" ry="4.01" fill="url(#dotg)" transform="rotate(-1.5 906.2 578.8)"/>
<ellipse cx="934.1" cy="572.2" rx="12.85" ry="3.98" fill="url(#dotg)" transform="rotate(-1.5 934.1 572.2)"/>
<ellipse cx="961.7" cy="565.7" rx="12.75" ry="3.95" fill="url(#dotg)" transform="rotate(-1.5 961.7 565.7)"/>
<ellipse cx="989.2" cy="559.3" rx="12.65" ry="3.92" fill="url(#dotg)" transform="rotate(-1.5 989.2 559.3)"/>
<ellipse cx="1016.4" cy="552.8" rx="12.56" ry="3.89" fill="url(#dotg)" transform="rotate(-1.5 1016.4 552.8)"/>
<ellipse cx="1043.5" cy="546.5" rx="12.46" ry="3.86" fill="url(#dotg)" transform="rotate(-1.5 1043.5 546.5)"/>
<ellipse cx="1070.3" cy="540.2" rx="12.37" ry="3.83" fill="url(#dotg)" transform="rotate(-1.5 1070.3 540.2)"/>
<ellipse cx="1097.0" cy="533.9" rx="12.28" ry="3.80" fill="url(#dotg)" transform="rotate(-1.5 1097.0 533.9)"/>
<ellipse cx="1123.4" cy="527.7" rx="12.18" ry="3.77" fill="url(#dotg)" transform="rotate(-1.5 1123.4 527.7)"/>
<ellipse cx="1149.6" cy="521.5" rx="12.09" ry="3.75" fill="url(#dotg)" transform="rotate(-1.5 1149.6 521.5)"/>
<ellipse cx="1175.7" cy="515.4" rx="12.00" ry="3.72" fill="url(#dotg)" transform="rotate(-1.5 1175.7 515.4)"/>
<ellipse cx="1201.5" cy="509.3" rx="11.91" ry="3.69" fill="url(#dotg)" transform="rotate(-1.5 1201.5 509.3)"/>
<ellipse cx="1227.2" cy="503.2" rx="11.83" ry="3.66" fill="url(#dotg)" transform="rotate(-1.5 1227.2 503.2)"/>
<ellipse cx="1252.6" cy="497.2" rx="11.74" ry="3.64" fill="url(#dotg)" transform="rotate(-1.5 1252.6 497.2)"/>
<ellipse cx="1277.9" cy="491.3" rx="11.65" ry="3.61" fill="url(#dotg)" transform="rotate(-1.5 1277.9 491.3)"/>
<ellipse cx="1303.0" cy="485.4" rx="11.57" ry="3.58" fill="url(#dotg)" transform="rotate(-1.5 1303.0 485.4)"/>
<ellipse cx="1327.9" cy="479.5" rx="11.48" ry="3.56" fill="url(#dotg)" transform="rotate(-1.5 1327.9 479.5)"/>
<ellipse cx="1352.7" cy="473.7" rx="11.40" ry="3.53" fill="url(#dotg)" transform="rotate(-1.5 1352.7 473.7)"/>
<ellipse cx="783.8" cy="622.0" rx="13.52" ry="4.19" fill="url(#dotg)" transform="rotate(-1.5 783.8 622.0)"/>
<ellipse cx="812.9" cy="615.0" rx="13.41" ry="4.15" fill="url(#dotg)" transform="rotate(-1.5 812.9 615.0)"/>
<ellipse cx="842.7" cy="609.0" rx="10.39" ry="3.65" fill="#2e0c0d" transform="rotate(-1.5 842.7 609.0)"/><ellipse cx="842.7" cy="609.0" rx="6.92" ry="2.44" fill="#f6f2e8" transform="rotate(-1.5 842.7 609.0)"/>
<ellipse cx="870.4" cy="601.4" rx="13.20" ry="4.09" fill="url(#dotg)" transform="rotate(-1.5 870.4 601.4)"/>
<ellipse cx="899.7" cy="595.4" rx="10.23" ry="3.59" fill="#2e0c0d" transform="rotate(-1.5 899.7 595.4)"/><ellipse cx="899.7" cy="595.4" rx="6.81" ry="2.41" fill="#f6f2e8" transform="rotate(-1.5 899.7 595.4)"/>
<ellipse cx="927.0" cy="588.0" rx="13.00" ry="4.03" fill="url(#dotg)" transform="rotate(-1.5 927.0 588.0)"/>
<ellipse cx="955.0" cy="581.3" rx="12.89" ry="3.99" fill="url(#dotg)" transform="rotate(-1.5 955.0 581.3)"/>
<ellipse cx="982.8" cy="574.7" rx="12.80" ry="3.96" fill="url(#dotg)" transform="rotate(-1.5 982.8 574.7)"/>
<ellipse cx="1010.3" cy="568.2" rx="12.70" ry="3.93" fill="url(#dotg)" transform="rotate(-1.5 1010.3 568.2)"/>
<ellipse cx="1037.6" cy="561.7" rx="12.60" ry="3.90" fill="url(#dotg)" transform="rotate(-1.5 1037.6 561.7)"/>
<ellipse cx="1064.8" cy="555.3" rx="12.50" ry="3.87" fill="url(#dotg)" transform="rotate(-1.5 1064.8 555.3)"/>
<ellipse cx="1091.7" cy="548.9" rx="12.41" ry="3.84" fill="url(#dotg)" transform="rotate(-1.5 1091.7 548.9)"/>
<ellipse cx="1118.4" cy="542.5" rx="12.32" ry="3.81" fill="url(#dotg)" transform="rotate(-1.5 1118.4 542.5)"/>
<ellipse cx="1144.9" cy="536.2" rx="12.22" ry="3.79" fill="url(#dotg)" transform="rotate(-1.5 1144.9 536.2)"/>
<ellipse cx="1171.2" cy="530.0" rx="12.13" ry="3.76" fill="url(#dotg)" transform="rotate(-1.5 1171.2 530.0)"/>
<ellipse cx="1197.3" cy="523.8" rx="12.04" ry="3.73" fill="url(#dotg)" transform="rotate(-1.5 1197.3 523.8)"/>
<ellipse cx="1223.2" cy="517.6" rx="11.95" ry="3.70" fill="url(#dotg)" transform="rotate(-1.5 1223.2 517.6)"/>
<ellipse cx="1249.0" cy="511.5" rx="11.86" ry="3.67" fill="url(#dotg)" transform="rotate(-1.5 1249.0 511.5)"/>
<ellipse cx="1275.4" cy="506.3" rx="9.20" ry="3.23" fill="#2e0c0d" transform="rotate(-1.5 1275.4 506.3)"/><ellipse cx="1275.4" cy="506.3" rx="6.12" ry="2.16" fill="#f6f2e8" transform="rotate(-1.5 1275.4 506.3)"/>
<ellipse cx="1299.9" cy="499.4" rx="11.69" ry="3.62" fill="url(#dotg)" transform="rotate(-1.5 1299.9 499.4)"/>
<ellipse cx="1325.9" cy="494.3" rx="9.06" ry="3.18" fill="#2e0c0d" transform="rotate(-1.5 1325.9 494.3)"/><ellipse cx="1325.9" cy="494.3" rx="6.03" ry="2.13" fill="#f6f2e8" transform="rotate(-1.5 1325.9 494.3)"/>
<ellipse cx="1350.0" cy="487.5" rx="11.52" ry="3.57" fill="url(#dotg)" transform="rotate(-1.5 1350.0 487.5)"/>
<ellipse cx="1374.8" cy="481.7" rx="11.43" ry="3.54" fill="url(#dotg)" transform="rotate(-1.5 1374.8 481.7)"/>
<ellipse cx="804.5" cy="631.6" rx="13.57" ry="4.20" fill="url(#dotg)" transform="rotate(-1.5 804.5 631.6)"/>
<ellipse cx="833.7" cy="624.6" rx="13.46" ry="4.17" fill="url(#dotg)" transform="rotate(-1.5 833.7 624.6)"/>
<ellipse cx="862.6" cy="617.7" rx="13.35" ry="4.14" fill="url(#dotg)" transform="rotate(-1.5 862.6 617.7)"/>
<ellipse cx="891.4" cy="610.8" rx="13.25" ry="4.10" fill="url(#dotg)" transform="rotate(-1.5 891.4 610.8)"/>
<ellipse cx="919.9" cy="604.0" rx="13.14" ry="4.07" fill="url(#dotg)" transform="rotate(-1.5 919.9 604.0)"/>
<ellipse cx="948.2" cy="597.2" rx="13.04" ry="4.04" fill="url(#dotg)" transform="rotate(-1.5 948.2 597.2)"/>
<ellipse cx="976.2" cy="590.5" rx="12.94" ry="4.01" fill="url(#dotg)" transform="rotate(-1.5 976.2 590.5)"/>
<ellipse cx="1004.1" cy="583.8" rx="12.84" ry="3.98" fill="url(#dotg)" transform="rotate(-1.5 1004.1 583.8)"/>
<ellipse cx="1031.7" cy="577.2" rx="12.74" ry="3.95" fill="url(#dotg)" transform="rotate(-1.5 1031.7 577.2)"/>
<ellipse cx="1059.1" cy="570.7" rx="12.64" ry="3.92" fill="url(#dotg)" transform="rotate(-1.5 1059.1 570.7)"/>
<ellipse cx="1086.3" cy="564.1" rx="12.55" ry="3.89" fill="url(#dotg)" transform="rotate(-1.5 1086.3 564.1)"/>
<ellipse cx="1113.3" cy="557.7" rx="12.45" ry="3.86" fill="url(#dotg)" transform="rotate(-1.5 1113.3 557.7)"/>
<ellipse cx="1140.1" cy="551.3" rx="12.36" ry="3.83" fill="url(#dotg)" transform="rotate(-1.5 1140.1 551.3)"/>
<ellipse cx="1166.7" cy="544.9" rx="12.26" ry="3.80" fill="url(#dotg)" transform="rotate(-1.5 1166.7 544.9)"/>
<ellipse cx="1193.1" cy="538.6" rx="12.17" ry="3.77" fill="url(#dotg)" transform="rotate(-1.5 1193.1 538.6)"/>
<ellipse cx="1219.2" cy="532.3" rx="12.08" ry="3.74" fill="url(#dotg)" transform="rotate(-1.5 1219.2 532.3)"/>
<ellipse cx="1245.2" cy="526.1" rx="11.99" ry="3.71" fill="url(#dotg)" transform="rotate(-1.5 1245.2 526.1)"/>
<ellipse cx="1271.0" cy="519.9" rx="11.90" ry="3.69" fill="url(#dotg)" transform="rotate(-1.5 1271.0 519.9)"/>
<ellipse cx="1296.6" cy="513.8" rx="11.81" ry="3.66" fill="url(#dotg)" transform="rotate(-1.5 1296.6 513.8)"/>
<ellipse cx="1322.0" cy="507.7" rx="11.72" ry="3.63" fill="url(#dotg)" transform="rotate(-1.5 1322.0 507.7)"/>
<ellipse cx="1347.3" cy="501.7" rx="11.64" ry="3.60" fill="url(#dotg)" transform="rotate(-1.5 1347.3 501.7)"/>
<ellipse cx="1372.3" cy="495.7" rx="11.55" ry="3.58" fill="url(#dotg)" transform="rotate(-1.5 1372.3 495.7)"/>
<ellipse cx="1397.1" cy="489.7" rx="11.47" ry="3.55" fill="url(#dotg)" transform="rotate(-1.5 1397.1 489.7)"/>
<ellipse cx="825.4" cy="641.4" rx="13.62" ry="4.22" fill="url(#dotg)" transform="rotate(-1.5 825.4 641.4)"/>
<ellipse cx="854.7" cy="634.3" rx="13.51" ry="4.18" fill="url(#dotg)" transform="rotate(-1.5 854.7 634.3)"/>
<ellipse cx="884.6" cy="628.1" rx="10.47" ry="3.68" fill="#2e0c0d" transform="rotate(-1.5 884.6 628.1)"/><ellipse cx="884.6" cy="628.1" rx="6.97" ry="2.46" fill="#f6f2e8" transform="rotate(-1.5 884.6 628.1)"/>
<ellipse cx="912.6" cy="620.3" rx="13.30" ry="4.12" fill="url(#dotg)" transform="rotate(-1.5 912.6 620.3)"/>
<ellipse cx="942.1" cy="614.2" rx="10.30" ry="3.62" fill="#2e0c0d" transform="rotate(-1.5 942.1 614.2)"/><ellipse cx="942.1" cy="614.2" rx="6.86" ry="2.42" fill="#f6f2e8" transform="rotate(-1.5 942.1 614.2)"/>
<ellipse cx="969.5" cy="606.6" rx="13.09" ry="4.05" fill="url(#dotg)" transform="rotate(-1.5 969.5 606.6)"/>
<ellipse cx="997.7" cy="599.8" rx="12.99" ry="4.02" fill="url(#dotg)" transform="rotate(-1.5 997.7 599.8)"/>
<ellipse cx="1025.6" cy="593.0" rx="12.89" ry="3.99" fill="url(#dotg)" transform="rotate(-1.5 1025.6 593.0)"/>
<ellipse cx="1053.3" cy="586.4" rx="12.79" ry="3.96" fill="url(#dotg)" transform="rotate(-1.5 1053.3 586.4)"/>
<ellipse cx="1080.8" cy="579.7" rx="12.69" ry="3.93" fill="url(#dotg)" transform="rotate(-1.5 1080.8 579.7)"/>
<ellipse cx="1108.1" cy="573.1" rx="12.59" ry="3.90" fill="url(#dotg)" transform="rotate(-1.5 1108.1 573.1)"/>
<ellipse cx="1135.2" cy="566.6" rx="12.49" ry="3.87" fill="url(#dotg)" transform="rotate(-1.5 1135.2 566.6)"/>
<ellipse cx="1162.0" cy="560.1" rx="12.40" ry="3.84" fill="url(#dotg)" transform="rotate(-1.5 1162.0 560.1)"/>
<ellipse cx="1188.7" cy="553.7" rx="12.30" ry="3.81" fill="url(#dotg)" transform="rotate(-1.5 1188.7 553.7)"/>
<ellipse cx="1215.2" cy="547.3" rx="12.21" ry="3.78" fill="url(#dotg)" transform="rotate(-1.5 1215.2 547.3)"/>
<ellipse cx="1241.4" cy="540.9" rx="12.12" ry="3.75" fill="url(#dotg)" transform="rotate(-1.5 1241.4 540.9)"/>
<ellipse cx="1267.5" cy="534.7" rx="12.02" ry="3.72" fill="url(#dotg)" transform="rotate(-1.5 1267.5 534.7)"/>
<ellipse cx="1293.3" cy="528.4" rx="11.93" ry="3.70" fill="url(#dotg)" transform="rotate(-1.5 1293.3 528.4)"/>
<ellipse cx="1319.9" cy="523.0" rx="9.25" ry="3.25" fill="#2e0c0d" transform="rotate(-1.5 1319.9 523.0)"/><ellipse cx="1319.9" cy="523.0" rx="6.16" ry="2.18" fill="#f6f2e8" transform="rotate(-1.5 1319.9 523.0)"/>
<ellipse cx="1344.5" cy="516.1" rx="11.76" ry="3.64" fill="url(#dotg)" transform="rotate(-1.5 1344.5 516.1)"/>
<ellipse cx="1370.7" cy="510.8" rx="9.11" ry="3.20" fill="#2e0c0d" transform="rotate(-1.5 1370.7 510.8)"/><ellipse cx="1370.7" cy="510.8" rx="6.07" ry="2.14" fill="#f6f2e8" transform="rotate(-1.5 1370.7 510.8)"/>
<ellipse cx="1394.9" cy="503.9" rx="11.58" ry="3.59" fill="url(#dotg)" transform="rotate(-1.5 1394.9 503.9)"/>
<ellipse cx="1419.8" cy="497.9" rx="11.50" ry="3.56" fill="url(#dotg)" transform="rotate(-1.5 1419.8 497.9)"/>
<ellipse cx="846.6" cy="651.3" rx="13.67" ry="4.23" fill="url(#dotg)" transform="rotate(-1.5 846.6 651.3)"/>
<ellipse cx="876.0" cy="644.1" rx="13.56" ry="4.20" fill="url(#dotg)" transform="rotate(-1.5 876.0 644.1)"/>
<ellipse cx="905.1" cy="637.0" rx="13.45" ry="4.17" fill="url(#dotg)" transform="rotate(-1.5 905.1 637.0)"/>
<ellipse cx="934.0" cy="630.0" rx="13.35" ry="4.13" fill="url(#dotg)" transform="rotate(-1.5 934.0 630.0)"/>
<ellipse cx="962.7" cy="623.0" rx="13.24" ry="4.10" fill="url(#dotg)" transform="rotate(-1.5 962.7 623.0)"/>
<ellipse cx="991.2" cy="616.1" rx="13.14" ry="4.07" fill="url(#dotg)" transform="rotate(-1.5 991.2 616.1)"/>
<ellipse cx="1019.4" cy="609.2" rx="13.03" ry="4.04" fill="url(#dotg)" transform="rotate(-1.5 1019.4 609.2)"/>
<ellipse cx="1047.4" cy="602.4" rx="12.93" ry="4.00" fill="url(#dotg)" transform="rotate(-1.5 1047.4 602.4)"/>
<ellipse cx="1075.2" cy="595.6" rx="12.83" ry="3.97" fill="url(#dotg)" transform="rotate(-1.5 1075.2 595.6)"/>
<ellipse cx="1102.8" cy="588.9" rx="12.73" ry="3.94" fill="url(#dotg)" transform="rotate(-1.5 1102.8 588.9)"/>
<ellipse cx="1130.2" cy="582.2" rx="12.63" ry="3.91" fill="url(#dotg)" transform="rotate(-1.5 1130.2 582.2)"/>
<ellipse cx="1157.3" cy="575.6" rx="12.53" ry="3.88" fill="url(#dotg)" transform="rotate(-1.5 1157.3 575.6)"/>
<ellipse cx="1184.3" cy="569.1" rx="12.44" ry="3.85" fill="url(#dotg)" transform="rotate(-1.5 1184.3 569.1)"/>
<ellipse cx="1211.0" cy="562.5" rx="12.34" ry="3.82" fill="url(#dotg)" transform="rotate(-1.5 1211.0 562.5)"/>
<ellipse cx="1237.5" cy="556.1" rx="12.25" ry="3.79" fill="url(#dotg)" transform="rotate(-1.5 1237.5 556.1)"/>
<ellipse cx="1263.8" cy="549.7" rx="12.15" ry="3.76" fill="url(#dotg)" transform="rotate(-1.5 1263.8 549.7)"/>
<ellipse cx="1290.0" cy="543.3" rx="12.06" ry="3.74" fill="url(#dotg)" transform="rotate(-1.5 1290.0 543.3)"/>
<ellipse cx="1315.9" cy="537.0" rx="11.97" ry="3.71" fill="url(#dotg)" transform="rotate(-1.5 1315.9 537.0)"/>
<ellipse cx="1341.6" cy="530.7" rx="11.88" ry="3.68" fill="url(#dotg)" transform="rotate(-1.5 1341.6 530.7)"/>
<ellipse cx="1367.2" cy="524.5" rx="11.79" ry="3.65" fill="url(#dotg)" transform="rotate(-1.5 1367.2 524.5)"/>
<ellipse cx="1392.5" cy="518.4" rx="11.70" ry="3.63" fill="url(#dotg)" transform="rotate(-1.5 1392.5 518.4)"/>
<ellipse cx="1417.7" cy="512.2" rx="11.62" ry="3.60" fill="url(#dotg)" transform="rotate(-1.5 1417.7 512.2)"/>
<ellipse cx="1442.6" cy="506.1" rx="11.53" ry="3.57" fill="url(#dotg)" transform="rotate(-1.5 1442.6 506.1)"/>
<ellipse cx="868.0" cy="661.3" rx="13.73" ry="4.25" fill="url(#dotg)" transform="rotate(-1.5 868.0 661.3)"/>
<ellipse cx="897.5" cy="654.1" rx="13.61" ry="4.22" fill="url(#dotg)" transform="rotate(-1.5 897.5 654.1)"/>
<ellipse cx="926.7" cy="646.9" rx="13.50" ry="4.18" fill="url(#dotg)" transform="rotate(-1.5 926.7 646.9)"/>
<ellipse cx="955.8" cy="639.8" rx="13.40" ry="4.15" fill="url(#dotg)" transform="rotate(-1.5 955.8 639.8)"/>
<ellipse cx="984.5" cy="632.7" rx="13.29" ry="4.12" fill="url(#dotg)" transform="rotate(-1.5 984.5 632.7)"/>
<ellipse cx="1013.1" cy="625.7" rx="13.18" ry="4.08" fill="url(#dotg)" transform="rotate(-1.5 1013.1 625.7)"/>
<ellipse cx="1041.4" cy="618.7" rx="13.08" ry="4.05" fill="url(#dotg)" transform="rotate(-1.5 1041.4 618.7)"/>
<ellipse cx="1069.5" cy="611.8" rx="12.98" ry="4.02" fill="url(#dotg)" transform="rotate(-1.5 1069.5 611.8)"/>
<ellipse cx="1097.4" cy="605.0" rx="12.87" ry="3.99" fill="url(#dotg)" transform="rotate(-1.5 1097.4 605.0)"/>
<ellipse cx="1125.1" cy="598.2" rx="12.77" ry="3.96" fill="url(#dotg)" transform="rotate(-1.5 1125.1 598.2)"/>
<ellipse cx="1152.5" cy="591.4" rx="12.67" ry="3.93" fill="url(#dotg)" transform="rotate(-1.5 1152.5 591.4)"/>
<ellipse cx="1179.7" cy="584.8" rx="12.57" ry="3.89" fill="url(#dotg)" transform="rotate(-1.5 1179.7 584.8)"/>
<ellipse cx="1206.7" cy="578.1" rx="12.48" ry="3.86" fill="url(#dotg)" transform="rotate(-1.5 1206.7 578.1)"/>
<ellipse cx="1233.6" cy="571.5" rx="12.38" ry="3.83" fill="url(#dotg)" transform="rotate(-1.5 1233.6 571.5)"/>
<ellipse cx="1260.2" cy="565.0" rx="12.29" ry="3.81" fill="url(#dotg)" transform="rotate(-1.5 1260.2 565.0)"/>
<ellipse cx="1286.6" cy="558.5" rx="12.19" ry="3.78" fill="url(#dotg)" transform="rotate(-1.5 1286.6 558.5)"/>
<ellipse cx="1312.7" cy="552.1" rx="12.10" ry="3.75" fill="url(#dotg)" transform="rotate(-1.5 1312.7 552.1)"/>
<ellipse cx="1338.7" cy="545.7" rx="12.01" ry="3.72" fill="url(#dotg)" transform="rotate(-1.5 1338.7 545.7)"/>
<ellipse cx="1364.5" cy="539.4" rx="11.92" ry="3.69" fill="url(#dotg)" transform="rotate(-1.5 1364.5 539.4)"/>
<ellipse cx="1390.1" cy="533.1" rx="11.83" ry="3.66" fill="url(#dotg)" transform="rotate(-1.5 1390.1 533.1)"/>
<ellipse cx="1415.6" cy="526.8" rx="11.74" ry="3.64" fill="url(#dotg)" transform="rotate(-1.5 1415.6 526.8)"/>
<ellipse cx="1440.8" cy="520.6" rx="11.65" ry="3.61" fill="url(#dotg)" transform="rotate(-1.5 1440.8 520.6)"/>
<ellipse cx="1465.8" cy="514.5" rx="11.56" ry="3.58" fill="url(#dotg)" transform="rotate(-1.5 1465.8 514.5)"/>
</svg>
<span class="t" style="left:387.50px;top:947.75px;font-size:11px;letter-spacing:-0.144px;color:#008000;">Y</span>
<span class="t" style="left:369.20px;top:973.75px;font-size:11px;letter-spacing:-1.834px;color:#0000e0;">Z</span>
<span class="t" style="left:362.00px;top:989.55px;font-size:11px;letter-spacing:-2.044px;color:#e00000;">X</span>
</main>
<footer id="status-area">
<div class="a" style="left:0;top:1046px;width:1920px;height:15px;background:#f7f7f7"></div>
<div class="a" style="left:149px;top:1046px;width:1771px;height:15px;background:#f7f7f7;border-top:1px solid #828282;box-shadow:inset 0 1px 0 #fff,inset 0 -1px 0 #fff"></div>
<div class="a" style="left:1918px;top:1046px;width:1px;height:15px;background:#a0b8b8"></div>
<div class="a" style="left:1919px;top:1046px;width:1px;height:15px;background:#9898b4"></div>
<div class="a" style="left:27px;top:1060px;width:123px;height:1px;background:#9a9a9a"></div>
<div class="a" style="left:0;top:1046px;width:2px;height:14px;background:#9bb8c4"></div>
<div class="a" style="left:27px;top:1046px;width:67px;height:14px;background:#b2b2b2;border-top:1px solid #3a3a3a;border-right:2px solid #fafafa"></div>
<div class="a btab" style="left:149px;width:68px"></div>
<div class="a btab" style="left:216px;width:102px"></div>
<div class="a btab" style="left:317px;width:79px"></div>
<div class="a" id="statusbar"></div>
<div class="a ssep" style="left:1593px"></div>
<div class="a ssep" style="left:1601px"></div>
<div class="a ssep" style="left:1702px"></div>
<div class="a ssep" style="left:1718px"></div>
<span class="t" style="left:104.30px;top:1047.10px;font-size:11.5px;letter-spacing:0.341px;color:#111;font-weight:700;">Model</span>
<span class="t" style="left:158.55px;top:1047.10px;font-size:11.5px;letter-spacing:-0.146px;color:#1e1e1e;">3D Views</span>
<span class="t" style="left:226.05px;top:1047.10px;font-size:11.5px;letter-spacing:0.260px;color:#1e1e1e;">Motion Study 1</span>
<span class="t" style="left:342.80px;top:1047.10px;font-size:11.5px;letter-spacing:-0.180px;color:#1e1e1e;">Static 1</span>
<span class="t" style="left:1.05px;top:1066.60px;font-size:11.5px;letter-spacing:-0.167px;color:#2a2a2a;">SOLIDWORKS Premium 2016 x64 Edition</span>
<span class="t" style="left:1511.05px;top:1066.60px;font-size:11.5px;letter-spacing:0.099px;color:#2a2a2a;">Under Defined</span>
<span class="t" style="left:1604.80px;top:1066.60px;font-size:11.5px;letter-spacing:0.235px;color:#2a2a2a;">Editing Assembly</span>
<span class="t" style="left:1759.80px;top:1066.60px;font-size:11.5px;letter-spacing:-1.348px;color:#2a2a2a;">IPS</span>
</footer>
<svg id="icons" style="left:0;top:0" width="1920" height="1080" viewBox="0 0 1920 1080"><defs><radialGradient id="shine" cx="0.35" cy="0.3" r="0.75"><stop offset="0" stop-color="#fff" stop-opacity=".75"/><stop offset=".45" stop-color="#fff" stop-opacity="0"/><stop offset="1" stop-color="#000" stop-opacity=".25"/></radialGradient><linearGradient id="skyg" x1="0" y1="0" x2="0" y2="1"><stop offset="0" stop-color="#c9e8f5"/><stop offset="1" stop-color="#3a9ccc"/></linearGradient><linearGradient id="grayg" x1="0" y1="0" x2="0" y2="1"><stop offset="0" stop-color="#f2f2f2"/><stop offset="1" stop-color="#cfcfcf"/></linearGradient><linearGradient id="tagg" x1="0" y1="0" x2="1" y2="1"><stop offset="0" stop-color="#ffe93a"/><stop offset=".55" stop-color="#ffd800"/><stop offset="1" stop-color="#f0a800"/></linearGradient></defs>
<g fill="#d9200f" stroke="#d9200f" stroke-width=".35" stroke-linejoin="round"><path d="M25.600 2.300 C29 1 34.500 .500 36.200 2.100 C37.800 3.700 36.600 6.700 26.600 12.500 L26.200 11.600 C32.800 7.600 34.300 5.100 33.500 3.900 C32.600 2.700 29 2.700 25.800 3.100 Z"/><path d="M19.300 14.300 L28.500 13.800 C31.800 13.800 32.600 16 31.400 18.600 C29.400 22.800 23 26.200 15.900 27.900 L22.500 17.200 L23.800 17.600 L19.400 25.100 C24 23.500 27.500 21 28.800 18.200 C29.500 16.600 29 15.900 27.400 15.900 L19.200 16.200 Z"/><path d="M43.900 10.600 C40 10.200 35.800 10.400 34.200 11.600 C32.200 13.200 33.200 15.200 35.400 16.800 L39.600 19.900 C41 21 40.600 22.200 39.200 22.700 C37 23.400 33 23.500 29.600 23.300 L29.700 24.600 C34 25 38.600 24.900 41 23.900 C43.400 22.900 43.800 20.600 41.600 18.900 L37.200 15.600 C35.800 14.400 35.800 13.400 36.800 12.800 C38.200 12 41 11.800 43.800 11.900 Z"/></g>
<text x="48.600" y="24.500" font-family='"Liberation Sans",sans-serif' font-size="14.8" font-style="italic" fill="#d9200f" textLength="100.4" lengthAdjust="spacingAndGlyphs"><tspan font-weight="700" stroke="#d9200f" stroke-width=".55">SOLID</tspan><tspan font-weight="400">WORKS</tspan></text>
<path d="M752.300 22.300L751.800 21.200L756.300 16.800L753 14.400L757.600 14.200L760.300 10L764.300 13.700L760.300 16.700L760 21.400L757.500 18.300L753.300 22.500Z" fill="#2d87b4" stroke="#2d87b4" stroke-width=".6" stroke-linejoin="round"/>
<rect x="774" y="0" width="1" height="30" fill="#c4c4c4"/><rect x="775" y="0" width="1" height="30" fill="#d6d6d6"/><rect x="776" y="0" width="1" height="30" fill="#e0e0e0"/>
<g transform="translate(790.0 6.0)"><path d="M4.700 1.500h6.800l5 5v11.300a1.200 1.200 0 0 1-1.200 1.200h-10.600a1.200 1.200 0 0 1-1.200-1.200v-15.100a1.200 1.200 0 0 1 1.200-1.200z" fill="#f2f2f2" stroke="#2a2a2a" stroke-width="1.300"/><path d="M11.500 1.500v5h5" fill="#fff" stroke="#2a2a2a" stroke-width="1.200" stroke-linejoin="round"/></g>
<path d="M815.5 14.7h5.0l-2.5 2.5z" fill="#333"/>
<g transform="translate(829.0 6.5)"><g transform="translate(10 10) scale(1.13) translate(-10 -10)"><path d="M2.5 4.5h5l1.5 2h4v11h-10.5z" fill="#bdbdbd" stroke="#333"/><path d="M6.5 9.5h12l-3.5 8h-12.5z" fill="#f2f2f2" stroke="#333"/><path d="M9 1.5c4 0 6 2 6.3 4.5h2.2l-3.8 4-3.7-4h2.2c-.3-1.500-1.700-2.500-3.200-2.800z" fill="#2b7fb0"/></g></g>
<path d="M855.5 14.7h5.0l-2.5 2.5z" fill="#333"/>
<g transform="translate(867.0 6.0)"><path d="M3 2.500h12.500v13h-11l-1.500-1.500z" fill="#2b7fb0" stroke="#1d5f86"/><rect x="5.500" y="3" width="8" height="5" fill="#f0f0f0" stroke="#888" stroke-width=".5"/><path d="M7 4.700h5M7 6.300h5" stroke="#666" stroke-width=".8"/><rect x="6" y="11" width="6.500" height="4.500" fill="#777"/><path d="M13.500 8.500l5.300 9.500h-10.600z" fill="#ffc61a" stroke="#c98a00" stroke-width=".8"/><rect x="12.800" y="11.500" width="1.500" height="3.300" fill="#111"/><rect x="12.800" y="15.500" width="1.500" height="1.400" fill="#111"/></g>
<path d="M894.5 14.7h5.0l-2.5 2.5z" fill="#333"/>
<g transform="translate(907.0 6.0)"><path d="M5.500 2.500h9l1 6h-11z" fill="#f7f7f7" stroke="#888"/><rect x="1.500" y="8" width="17" height="7.500" rx="1.500" fill="#2b7fb0" stroke="#1d5f86"/><path d="M2.500 11.500h15" stroke="#8fd0ee" stroke-width="1.200"/><path d="M4 15.500h12l.8 3h-13.600z" fill="#f2f2f2" stroke="#666"/><path d="M5 13.500h10" stroke="#0d3c58" stroke-width="1.400"/></g>
<path d="M933.5 14.7h5.0l-2.5 2.5z" fill="#333"/>
<g transform="translate(945.0 6.0)"><path d="M1.500 2.500l.3 8 7.700-1.200-2.600-2.200c3-1.800 7.200.2 6.800 4.200-.2 2.300-1.500 4.200-3 5.700l2.300 1.500c3.500-2.700 5.200-7.500 3.400-11-2-3.900-7.300-5.300-11.800-2.600z" fill="#2b7fb0" stroke="#1d5f86" stroke-width=".6"/></g>
<path d="M972.5 14.7h5.0l-2.5 2.5z" fill="#333"/>
<g transform="translate(985.0 6.0)"><path d="M4.500 1.500v15l3.700-3.300 2.600 5.600 2.400-1.100-2.600-5.400h5z" fill="#fff" stroke="#222" stroke-width="1.100" stroke-linejoin="round"/></g>
<path d="M1012.5 14.7h5.0l-2.5 2.5z" fill="#333"/>
<g transform="translate(1025.0 6.0)"><rect x="5.500" y="1.500" width="9" height="17" rx="4.500" fill="#d8d8d8" stroke="#666"/><circle cx="10" cy="6.200" r="2.800" fill="#e0301e"/><circle cx="10" cy="13.800" r="2.800" fill="#3aa52a"/></g>
<g transform="translate(1051.0 6.0)"><rect x="2.500" y="1.500" width="15" height="17" rx="1" fill="#f4f4f4" stroke="#333" stroke-width="1.100"/><rect x="4.500" y="3.7" width="3.600" height="2.800" fill="#7fc1e2" stroke="#2b7fb0" stroke-width=".9"/><path d="M10 5.1h5.500" stroke="#333" stroke-width="1.100"/><rect x="4.500" y="8.5" width="3.600" height="2.800" fill="#7fc1e2" stroke="#2b7fb0" stroke-width=".9"/><path d="M10 9.9h5.500" stroke="#333" stroke-width="1.100"/><rect x="4.500" y="13.3" width="3.600" height="2.800" fill="#7fc1e2" stroke="#2b7fb0" stroke-width=".9"/><path d="M10 14.700000000000001h5.500" stroke="#333" stroke-width="1.100"/></g>
<g transform="translate(1076.0 6.0)"><path d="M15.83 8.59L17.91 8.80L17.91 11.20L15.83 11.41L15.12 13.12L16.44 14.74L14.74 16.44L13.12 15.12L11.41 15.83L11.20 17.91L8.80 17.91L8.59 15.83L6.88 15.12L5.26 16.44L3.56 14.74L4.88 13.12L4.17 11.41L2.09 11.20L2.09 8.80L4.17 8.59L4.88 6.88L3.56 5.26L5.26 3.56L6.88 4.88L8.59 4.17L8.80 2.09L11.20 2.09L11.41 4.17L13.12 4.88L14.74 3.56L16.44 5.26L15.12 6.88Z" fill="#f2f2f2" stroke="#333" stroke-width="1" stroke-linejoin="round"/><circle cx="10" cy="10" r="2.600" fill="#e6e6e6" stroke="#333" stroke-width="1"/></g>
<path d="M1102.5 14.7h5.0l-2.5 2.5z" fill="#333"/>
<path d="M1580.500 10.500l4 4-4 4" fill="none" stroke="#fff" stroke-width="1.600"/><path d="M1585.500 19.500h4.500" stroke="#fff" stroke-width="1.400"/>
<g transform="translate(1738.0 5.0)"><circle cx="8" cy="8" r="5.800" fill="none" stroke="#666" stroke-width="1.700"/><path d="M12.300 12.300l5.500 5.500" stroke="#666" stroke-width="2.400" stroke-linecap="round"/></g>
<path d="M1763.2 14.8h5.6l-2.8 2.8z" fill="#555"/>
<path d="M1805.3 14.7h6.3l-3.1 3.1z" fill="#333"/>
<rect x="1824" y="19" width="10" height="2.500" fill="#555"/>
<rect x="1847.500" y="8.500" width="16" height="14" fill="none" stroke="#555" stroke-width="1.200"/><path d="M1855.500 8.500v14" stroke="#555" stroke-width="1.200"/><path d="M1849.500 15.500h4.500M1857 15.500h4.500" stroke="#555"/><path d="M1851.500 13.500l-2 2 2 2M1859.500 13.500l2 2-2 2" fill="none" stroke="#555"/>
<rect x="1877.500" y="10.500" width="8" height="6" fill="none" stroke="#555" stroke-width="1.200"/><rect x="1874.500" y="13.500" width="8" height="6" fill="#e6e6e6" stroke="#555" stroke-width="1.200"/>
<path d="M1901.500 10.500l11 11M1912.500 10.500l-11 11" stroke="#555" stroke-width="1.400"/>
<g transform="translate(28.0 49.0)"><g opacity=".55"><path d="M3 3.75l5.5 -2.75l5.5 2.75l-5.5 2.75z" fill="#e3e3e3" stroke="#aaa" stroke-width="0.8" stroke-linejoin="round"/><path d="M3 3.75l5.5 2.75v6.050000000000001l-5.5 -2.75z" fill="#cfcfcf" stroke="#aaa" stroke-width="0.8" stroke-linejoin="round"/><path d="M14 3.75l-5.5 2.75v6.050000000000001l5.5 -2.75z" fill="#bdbdbd" stroke="#aaa" stroke-width="0.8" stroke-linejoin="round"/><path d="M1 8l5-3v6l5 3-3 3-7-4z" fill="#f0f0f0" stroke="#ccc" stroke-width=".8"/><path d="M15 9l3 2.500-8 8-3.500 1 .8-3.500z" fill="#e0e0e0" stroke="#999" stroke-width=".9"/><path d="M6.500 20.500l.8-3.500 2.700 2.500z" fill="#aaa"/></g></g>
<g transform="translate(101.5 42.0)"><path d="M1.500 8.500h5l1 1.500h4v8h-10z" fill="#d0d0d0" stroke="#333"/><path d="M4 12.500h10.500l-3 6h-10z" fill="#f4f4f4" stroke="#333"/><path d="M3.500 9.500c.5-2.500 2-4 4.500-4.300v-1.700l3.500 2.800-3.500 2.800v-1.700c-1.600.2-2.600.9-3 2.100z" fill="#222"/><path d="M10.5 2.25l4.5 -2.25l4.5 2.25l-4.5 2.25z" fill="#f4f4f4" stroke="#333" stroke-width="0.8" stroke-linejoin="round"/><path d="M10.5 2.25l4.5 2.25v4.95l-4.5 -2.25z" fill="#e4e4e4" stroke="#333" stroke-width="0.8" stroke-linejoin="round"/><path d="M19.5 2.25l-4.5 2.25v4.95l4.5 -2.25z" fill="#cfcfcf" stroke="#333" stroke-width="0.8" stroke-linejoin="round"/><path d="M13 2.200l2.700-1.300 2.600 1.300v3l-2.600 1.300-2.700-1.300z" fill="#2b7fb0" stroke="#15557b" stroke-width=".7"/><path d="M15.700 3.300v2" stroke="#bfe4f5" stroke-width=".8"/></g>
<g transform="translate(158.0 49.0)"><g transform="rotate(-44 10 10) translate(10 10) scale(1.12) translate(-10 -10)" fill="none" stroke="#222" stroke-width="1.150" stroke-linecap="round"><path d="M13.500 5v9.500a3.500 3.500 0 0 1-7 0v-11.500a2.400 2.400 0 0 1 4.800 0v10.700a1.100 1.100 0 0 1-2.200 0v-8.200"/></g></g>
<g transform="translate(211.0 49.0)"><g opacity=".6"><rect x="1.500" y="1.500" width="17" height="17" fill="#f2f2f2" stroke="#aaa"/><rect x="1.500" y="1.500" width="17" height="3" fill="#ddd" stroke="#aaa"/><path d="M5 11l4-3 3 1v2l3 1v4l-4 1-6-3z" fill="#e6e6e6" stroke="#aaa"/><path d="M9 8v3l3 1M9 11l-2 2" fill="none" stroke="#aaa"/></g></g>
<g transform="translate(282.0 41.0)"><path d="M2.5 2.5h3.500v2.500h3.500v5h-7z" fill="#2b7fb0" stroke="#222" stroke-width="1.100" stroke-linejoin="miter"/><path d="M5.5 7.5h2" stroke="#222" stroke-width="1"/><path d="M11.5 2.5h3.500v2.500h3.500v5h-7z" fill="#f6f6f6" stroke="#222" stroke-width="1.100" stroke-linejoin="miter"/><path d="M14.5 7.5h2" stroke="#222" stroke-width="1"/><path d="M2.5 11.5h3.500v2.500h3.500v5h-7z" fill="#f6f6f6" stroke="#222" stroke-width="1.100" stroke-linejoin="miter"/><path d="M5.5 16.5h2" stroke="#222" stroke-width="1"/><path d="M11.5 11.5h3.500v2.500h3.500v5h-7z" fill="#f6f6f6" stroke="#222" stroke-width="1.100" stroke-linejoin="miter"/><path d="M14.5 16.5h2" stroke="#222" stroke-width="1"/></g>
<g transform="translate(347.0 49.0)"><path d="M1.500 3.500h5l1.200 2h10.800v13h-17z" fill="#e4e4e4" stroke="#333" stroke-width="1.100"/><path d="M1.500 7.500h17" stroke="#333" stroke-width=".8"/><rect x="5" y="10" width="4" height="7" rx="1" fill="#cfcfcf" stroke="#333"/><rect x="9" y="11.500" width="7" height="4" fill="#f4f4f4" stroke="#333"/><path d="M15 1l5-.5-4 4.500h2.500l-8.500 7 3.500-6h-2.500z" fill="#222"/></g>
<g transform="translate(412.0 42.0)"><path d="M8 3.75l5.5 -2.75l5.5 2.75l-5.5 2.75z" fill="#6db9dd" stroke="#15557b" stroke-width="0.8" stroke-linejoin="round"/><path d="M8 3.75l5.5 2.75v6.050000000000001l-5.5 -2.75z" fill="#2b7fb0" stroke="#15557b" stroke-width="0.8" stroke-linejoin="round"/><path d="M19 3.75l-5.5 2.75v6.050000000000001l5.5 -2.75z" fill="#1d6e9c" stroke="#15557b" stroke-width="0.8" stroke-linejoin="round"/><path d="M1 6.875l5.75 -2.875l5.75 2.875l-5.75 2.875z" fill="#f8f8f8" stroke="#333" stroke-width="0.9" stroke-linejoin="round"/><path d="M1 6.875l5.75 2.875v6.325l-5.75 -2.875z" fill="#ececec" stroke="#333" stroke-width="0.9" stroke-linejoin="round"/><path d="M12.5 6.875l-5.75 2.875v6.325l5.75 -2.875z" fill="#d0d0d0" stroke="#333" stroke-width="0.9" stroke-linejoin="round"/><path d="M7.500 11.500h7v-2l4 3-4 3v-2h-7z" fill="#222"/></g>
<g transform="translate(488.5 49.0)"><path d="M8.5 8.95l3.3 -2.2v-2.75l3.3 -0.0l1.65 1.1v6.050000000000001l-4.95 3.3l-3.3 -2.42z" fill="#f6f6f6" stroke="#333" stroke-width="0.9" stroke-linejoin="round"/><path d="M8.5 8.95l3.3 2.2l1.65 -1.1v-3.3M11.8 11.15v3.3" fill="none" stroke="#333" stroke-width="0.9"/><path d="M2 12l4-2.500v-3l3.500 0 2 1.200v7l-5.500 3.800-4-2.800z" fill="#2b7fb0" stroke="#15557b" stroke-width=".9" stroke-linejoin="round"/><path d="M2 12l4 2.500 2-1.200v-4M6 14.500v4" fill="none" stroke="#15557b" stroke-width=".8"/><path d="M4.500 4.500c2-3 6-3.500 8.500-1.500" fill="none" stroke="#222" stroke-width="1.300"/><path d="M2.500 4l4.200-2.200.3 4.200z" fill="#222"/><path d="M12 .8l2.500 3.500-3.800.6z" fill="#222"/></g>
<g transform="translate(558.0 41.0)"><path d="M2.500 4.500c0-3 15-3 15 0v11c0 3-15 3-15 0z" fill="#e4e4e4" stroke="#333" stroke-width="1.100"/><path d="M2.500 4.500c0 2.500 15 2.500 15 0" fill="#f6f6f6" stroke="#333" stroke-width=".9"/><path d="M2.500 11.500c0 2.500 15 2.500 15 0" fill="none" stroke="#999" stroke-width=".7"/><path d="M5.500 4.500c0-2 9-2 9 0v2.500c0 1-3 1-3 1v9.500h-3v-9.500s-3 0-3-1z" fill="#2b7fb0" stroke="#15557b" stroke-width=".9"/><path d="M5.500 4.500c0 1.500 9 1.500 9 0" fill="none" stroke="#9fd6ef" stroke-width=".9"/></g>
<g transform="translate(617.0 41.0)"><rect x="1.500" y="1.500" width="3" height="3" fill="#bfe4f5" stroke="#2b7fb0" stroke-width="1.200"/><path d="M6.500 5.500l10-3v11.500l-10 4z" fill="#eee" stroke="#333" stroke-width="1"/><path d="M11.500 1v18.500" stroke="#222" stroke-width="1.100" stroke-dasharray="2.500 1.500"/></g>
<g transform="translate(675.0 49.0)"><path d="M17.68 6.99L19.43 7.10L19.43 8.90L17.68 9.01L17.17 10.24L18.33 11.56L17.06 12.83L15.74 11.67L14.51 12.18L14.40 13.93L12.60 13.93L12.49 12.18L11.26 11.67L9.94 12.83L8.67 11.56L9.83 10.24L9.32 9.01L7.57 8.90L7.57 7.10L9.32 6.99L9.83 5.76L8.67 4.44L9.94 3.17L11.26 4.33L12.49 3.82L12.60 2.07L14.40 2.07L14.51 3.82L15.74 4.33L17.06 3.17L18.33 4.44L17.17 5.76Z" fill="#f6f6f6" stroke="#333" stroke-width=".9" stroke-linejoin="round"/><circle cx="13.500" cy="8" r="1.800" fill="#fff" stroke="#333" stroke-width=".9"/><path d="M10.00 14.15L11.44 14.25L11.44 15.75L10.00 15.85L9.57 16.87L10.53 17.96L9.46 19.03L8.37 18.07L7.35 18.50L7.25 19.94L5.75 19.94L5.65 18.50L4.63 18.07L3.54 19.03L2.47 17.96L3.43 16.87L3.00 15.85L1.56 15.75L1.56 14.25L3.00 14.15L3.43 13.13L2.47 12.04L3.54 10.97L4.63 11.93L5.65 11.50L5.75 10.06L7.25 10.06L7.35 11.50L8.37 11.93L9.46 10.97L10.53 12.04L9.57 13.13Z" fill="#9a9a9a" stroke="#555" stroke-width=".8" stroke-linejoin="round"/><circle cx="6.500" cy="15" r="1.400" fill="#eee" stroke="#555" stroke-width=".8"/><path d="M4.500 1.500v6M1.500 4.500h6M2.400 2.400l4.200 4.200M6.600 2.400l-4.200 4.200" stroke="#2b7fb0" stroke-width="1.100"/></g>
<g transform="translate(730.0 49.0)"><rect x="1.500" y="2.500" width="12" height="10.500" fill="#fff" stroke="#333" stroke-width="1.100"/><rect x="1.500" y="2.500" width="12" height="2.500" fill="#2b7fb0" stroke="#15557b"/><path d="M1.500 7.700h12M1.500 10.400h12M5.500 5v8M9.500 5v8" stroke="#333" stroke-width=".9"/><path d="M7 13l5 4.500 7-2.500v-4.500l-4-2z" fill="#e4e4e4" stroke="#333" stroke-width=".9" stroke-linejoin="round"/><path d="M12.5 8.125l3.25 -1.625l3.25 1.625l-3.25 1.625z" fill="#8ccbe8" stroke="#15557b" stroke-width="0.8" stroke-linejoin="round"/><path d="M12.5 8.125l3.25 1.625v3.575l-3.25 -1.625z" fill="#2b7fb0" stroke="#15557b" stroke-width="0.8" stroke-linejoin="round"/><path d="M19.0 8.125l-3.25 1.625v3.575l3.25 -1.625z" fill="#1d6e9c" stroke="#15557b" stroke-width="0.8" stroke-linejoin="round"/></g>
<g transform="translate(790.5 49.0)"><path d="M1 12.4l3.5999999999999996 -2.4000000000000004v-3.0l3.5999999999999996 -0.0l1.7999999999999998 1.2000000000000002v6.6000000000000005l-5.4 3.5999999999999996l-3.5999999999999996 -2.64z" fill="#f0f0f0" stroke="#333" stroke-width="1" stroke-linejoin="round"/><path d="M1 12.4l3.5999999999999996 2.4000000000000004l1.7999999999999998 -1.2000000000000002v-3.5999999999999996M4.6 14.8v3.5999999999999996" fill="none" stroke="#333" stroke-width="1"/><path d="M12 1.5l3.0 -1.5l3.0 1.5l-3.0 1.5z" fill="#8ccbe8" stroke="#15557b" stroke-width="0.8" stroke-linejoin="round"/><path d="M12 1.5l3.0 1.5v3.3000000000000003l-3.0 -1.5z" fill="#2b7fb0" stroke="#15557b" stroke-width="0.8" stroke-linejoin="round"/><path d="M18 1.5l-3.0 1.5v3.3000000000000003l3.0 -1.5z" fill="#1d6e9c" stroke="#15557b" stroke-width="0.8" stroke-linejoin="round"/><path d="M10 10l3.500-4M12 12.500l3-3" stroke="#222" stroke-width="1.200" stroke-dasharray="2 1.200"/></g>
<g transform="translate(845.0 49.0)"><g opacity=".5"><path d="M1 12.4l3.5999999999999996 -2.4000000000000004v-3.0l3.5999999999999996 -0.0l1.7999999999999998 1.2000000000000002v6.6000000000000005l-5.4 3.5999999999999996l-3.5999999999999996 -2.64z" fill="#f4f4f4" stroke="#aaa" stroke-width="1" stroke-linejoin="round"/><path d="M1 12.4l3.5999999999999996 2.4000000000000004l1.7999999999999998 -1.2000000000000002v-3.5999999999999996M4.6 14.8v3.5999999999999996" fill="none" stroke="#aaa" stroke-width="1"/><path d="M12 1.5l3.0 -1.5l3.0 1.5l-3.0 1.5z" fill="#f0f0f0" stroke="#aaa" stroke-width="0.8" stroke-linejoin="round"/><path d="M12 1.5l3.0 1.5v3.3000000000000003l-3.0 -1.5z" fill="#e4e4e4" stroke="#aaa" stroke-width="0.8" stroke-linejoin="round"/><path d="M18 1.5l-3.0 1.5v3.3000000000000003l3.0 -1.5z" fill="#ddd" stroke="#aaa" stroke-width="0.8" stroke-linejoin="round"/><path d="M10 10l3.500-4M12 12.500l3-3" stroke="#aaa" stroke-width="1.200" stroke-dasharray="2 1.200"/></g></g>
<g transform="translate(904.0 49.0)"><path d="M5 1.500l14 6v6" fill="none" stroke="#222" stroke-width="1.200"/><path d="M8 2.800v2.500M11 4.100v2.500M14 5.400v2.500M17 6.700v2.500" stroke="#222" stroke-width="1"/><path d="M1.500 8l12 7.500" stroke="#2b7fb0" stroke-width="1.800"/><path d="M19.500 19l-9-1.500 4.500-5.500z" fill="#1d6e9c"/></g>
<g transform="translate(967.0 49.0)"><path d="M3 3.75l6.5 -3.25l6.5 3.25l-6.5 3.25z" fill="#f8f8f8" stroke="#333" stroke-width="0.9" stroke-linejoin="round"/><path d="M3 3.75l6.5 3.25v7.15l-6.5 -3.25z" fill="#ececec" stroke="#333" stroke-width="0.9" stroke-linejoin="round"/><path d="M16 3.75l-6.5 3.25v7.15l6.5 -3.25z" fill="#d8d8d8" stroke="#333" stroke-width="0.9" stroke-linejoin="round"/><path d="M9.500 10.500v9.500M16 7v7.500l-6.500 5.500-6.500-3v-3" fill="#f4f4f4" stroke="#333" stroke-width=".9"/><path d="M8 3.375l4.75 -2.375l4.75 2.375l-4.75 2.375z" fill="#cfe9f6" stroke="#15557b" stroke-width="0.9" stroke-linejoin="round"/><path d="M8 3.375l4.75 2.375v5.2250000000000005l-4.75 -2.375z" fill="#2b7fb0" stroke="#15557b" stroke-width="0.9" stroke-linejoin="round"/><path d="M17.5 3.375l-4.75 2.375v5.2250000000000005l4.75 -2.375z" fill="#f4f4f4" stroke="#15557b" stroke-width="0.9" stroke-linejoin="round"/><path d="M5 9l5.300 9.500h-10.600z" fill="#ffc61a" stroke="#d2691e" stroke-width=".9" stroke-linejoin="round"/><rect x="4.200" y="12" width="1.600" height="3.300" fill="#111"/><rect x="4.200" y="16" width="1.600" height="1.400" fill="#111"/></g>
<g transform="translate(1030.0 49.0)"><path d="M3 5.500l1.500-2.500h3l1.200 1.500h8.800a1 1 0 0 1 1 1v11a1 1 0 0 1-1 1h-15a1 1 0 0 1-1-1v-10a1 1 0 0 1 1-1z" fill="#e6e6e6" stroke="#333" stroke-width="1.100" stroke-linejoin="round"/><path d="M9.500 4.500l1-1.800h4.500l1 1.800" fill="#ddd" stroke="#333" stroke-width="1"/><circle cx="11" cy="11.500" r="5" fill="#f4f4f4" stroke="#333" stroke-width="1.100"/><circle cx="11" cy="11.500" r="3.200" fill="#555" stroke="#222" stroke-width=".8"/><circle cx="10" cy="10.500" r="1" fill="#ddd"/><circle cx="16.500" cy="6.500" r=".8" fill="#333"/></g>
<path d="M109.0 103.4h5.0l-2.5 2.5z" fill="#222"/>
<path d="M290.0 103.4h5.0l-2.5 2.5z" fill="#222"/>
<path d="M420.0 103.4h5.0l-2.5 2.5z" fill="#222"/>
<path d="M566.0 103.4h5.0l-2.5 2.5z" fill="#222"/>
<path d="M625.0 103.4h5.0l-2.5 2.5z" fill="#222"/>
<g transform="translate(945.0 123.0)" opacity="0.78"><path d="M1 13.500l8-3 9.500 3.500-8.500 4z" fill="#8ccbe8" stroke="#2b7fb0" stroke-width=".8"/><path d="M9.500 13v-10" stroke="#444" stroke-width="1.800"/><path d="M6.500 5l3-4 3 4z" fill="#444"/></g>
<g transform="translate(971.0 123.0)" opacity="0.78"><path d="M7.500 12.500l-5.500 6" stroke="#6fb4d8" stroke-width="2.600" stroke-linecap="round"/><circle cx="12" cy="7.500" r="5.800" fill="#f4f4f4" stroke="#777" stroke-width="1.100"/><path d="M12 3.500l1.300 1.600h-2.600zM12 11.500l1.300-1.600h-2.600zM8 7.500l1.600-1.300v2.600zM16 7.500l-1.600-1.300v2.600z" fill="#555"/></g>
<g transform="translate(997.0 123.0)" opacity="0.78"><rect x="7.500" y="1.500" width="11" height="11.500" fill="none" stroke="#333" stroke-width="1.100" stroke-dasharray="2.500 1.500"/><path d="M6.500 13l-5 5.500" stroke="#6fb4d8" stroke-width="2.600" stroke-linecap="round"/><circle cx="10.500" cy="8.500" r="5.500" fill="#eef3f6" stroke="#888" stroke-width="1.100"/></g>
<g transform="translate(1023.0 123.0)" opacity="0.78"><g transform="rotate(-32 9 11)"><rect x="1" y="7.500" width="9" height="7" rx="1.500" fill="url(#grayg)" stroke="#777" stroke-width=".9"/><rect x="10" y="8.500" width="5.500" height="5" fill="#e6e6e6" stroke="#777" stroke-width=".9"/><rect x="15.500" y="7.800" width="2.500" height="6.400" rx=".8" fill="#d0d0d0" stroke="#777" stroke-width=".9"/><ellipse cx="2.500" cy="11" rx="1.500" ry="3.200" fill="#bbb" stroke="#777" stroke-width=".7"/></g><path d="M19 14.500h-5.500v2.200l-4.500-3.200 4.500-3.200v2.200h5.500z" fill="#2b7fb0" transform="translate(0 3)"/></g>
<g transform="translate(1049.0 123.0)" opacity="0.78"><path d="M1.500 7c0-5 17-5 17 0v9.500h-5.500v-6c0-2-6-2-6 0v6h-5.500z" fill="#e8e8e8" stroke="#666" stroke-width="1"/><path d="M1.500 7.500h5.500v9h-5.500zM13 7.500h5.500v9h-5.500z" fill="#5aa9d1" stroke="#2b6e93" stroke-width=".8"/><path d="M2 12l4-4M2 15.500l4.500-4.500M13.500 12l4-4M13.500 15.500l4.500-4.500" stroke="#d5ecf7" stroke-width=".9"/><path d="M7 7c0-2.500 6-2.500 6 0v9.500c0-2-6-2-6 0z" fill="#d8d8d8" stroke="#777" stroke-width=".8"/></g>
<g transform="translate(1075.0 123.0)" opacity="0.78"><g transform="rotate(-32 9 11)"><rect x="1" y="7.500" width="9" height="7" rx="1.500" fill="url(#grayg)" stroke="#777" stroke-width=".9"/><rect x="10" y="8.500" width="5.500" height="5" fill="#e6e6e6" stroke="#777" stroke-width=".9"/><rect x="15.500" y="7.800" width="2.500" height="6.400" rx=".8" fill="#d0d0d0" stroke="#777" stroke-width=".9"/><ellipse cx="2.500" cy="11" rx="1.500" ry="3.200" fill="#bbb" stroke="#777" stroke-width=".7"/></g><path d="M9 0l-5 6h3l-2.500 4 7-6h-3.200l3.200-4z" fill="#444"/></g>
<text x="1084.500" y="143" font-family='"Liberation Serif",serif' font-size="13" font-weight="700" fill="#2b7fb0" opacity="0.78">A</text>
<g transform="translate(1102.0 123.0)" opacity="0.78"><path d="M4.500 5l5-2.500 7 2v11l-5 3-7-2.500z" fill="#f6f6f6" stroke="#888" stroke-width=".8"/><path d="M9.500 7.500l7-3v11l-5 3-2-.8z" fill="#7fc1e2" stroke="#2b7fb0" stroke-width=".8"/><path d="M4.500 5l5 2.500v10.300" fill="none" stroke="#888" stroke-width=".8"/><path d="M10.500 0v4M8.800 3l1.700 2.200 1.700-2.200z" stroke="#333" stroke-width="1.200" fill="#333"/><path d="M0 9.500h4M3.200 7.800l2.200 1.700-2.200 1.700z" stroke="#333" stroke-width="1.200" fill="#333"/></g>
<path d="M1127.5 132.4h4.9l-2.4 2.4z" fill="#999"/>
<g transform="translate(1141.0 123.0)" opacity="0.78"><path d="M2 4.500l6-3 10 2.500v11l-8 4-8-3.500z" fill="#f4f4f4" stroke="#888" stroke-width=".8"/><path d="M2 4.500l8 2.500v12l-8-3.500z" fill="#6db6da" stroke="#2b7fb0" stroke-width=".8"/><path d="M10 7l3.500-1.300v11.600l-3.500 1.700z" fill="#a9d8ee"/><path d="M10 7l8-3" stroke="#888" stroke-width=".8"/></g>
<path d="M1167.5 132.4h4.9l-2.4 2.4z" fill="#999"/>
<g transform="translate(1181.0 123.0)" opacity="0.78"><path d="M1 10c3-5.500 15-5.500 18 0c-3 5.500-15 5.500-18 0z" fill="#efefef" stroke="#aaa" stroke-width="1"/><circle cx="10" cy="9.500" r="3.800" fill="#999"/><circle cx="10" cy="9.500" r="1.800" fill="#666"/><path d="M10 2v16" stroke="#666" stroke-width="1"/></g>
<path d="M1207.5 132.4h4.9l-2.4 2.4z" fill="#999"/>
<g transform="translate(1221.0 123.0)" opacity="0.85"><path d="M8.50 8.00L7.20 0.61A7.5 7.5 0 0 1 15.97 7.35Z" fill="#d8262c"/><path d="M8.50 8.00L15.97 7.35A7.5 7.5 0 0 1 9.80 15.39Z" fill="#f2c21a"/><path d="M8.50 8.00L9.80 15.39A7.5 7.5 0 0 1 1.03 8.65Z" fill="#2fa836"/><path d="M8.50 8.00L1.03 8.65A7.5 7.5 0 0 1 7.20 0.61Z" fill="#2f6fd6"/><circle cx="8.5" cy="8" r="7.5" fill="url(#shine)"/><g transform="rotate(45 13 13)"><rect x="10.800" y="6" width="4.400" height="9" fill="#8ccbe8" stroke="#555" stroke-width=".8"/><path d="M10.800 15h4.400l-2.200 4z" fill="#f2f2f2" stroke="#555" stroke-width=".7"/><rect x="10.800" y="4" width="4.400" height="2.500" fill="#999" stroke="#555" stroke-width=".7"/></g></g>
<g transform="translate(1247.0 123.0)" opacity="0.85"><rect x="0.5" y="9" width="19" height="10" fill="#111"/><rect x="0.80" y="9.30" width="3.20" height="4.40" fill="#e8e8e8"/><rect x="8.40" y="9.30" width="3.20" height="4.40" fill="#e8e8e8"/><rect x="16.00" y="9.30" width="3.20" height="4.40" fill="#e8e8e8"/><rect x="4.60" y="14.30" width="3.20" height="4.40" fill="#e8e8e8"/><rect x="12.20" y="14.30" width="3.20" height="4.40" fill="#e8e8e8"/><path d="M9.50 7.50L8.23 0.31A7.3 7.3 0 0 1 16.77 6.86Z" fill="#d8262c"/><path d="M9.50 7.50L16.77 6.86A7.3 7.3 0 0 1 10.77 14.69Z" fill="#f2c21a"/><path d="M9.50 7.50L10.77 14.69A7.3 7.3 0 0 1 2.23 8.14Z" fill="#2fa836"/><path d="M9.50 7.50L2.23 8.14A7.3 7.3 0 0 1 8.23 0.31Z" fill="#2f6fd6"/><circle cx="9.5" cy="7.5" r="7.3" fill="url(#shine)"/></g>
<path d="M1273.5 132.4h4.9l-2.4 2.4z" fill="#999"/>
<g transform="translate(1287.0 123.0)" opacity="0.9"><rect x="1.500" y="2.500" width="17" height="11.500" fill="#e0e0e0" stroke="#777" stroke-width="1.200"/><path d="M10 14v3.500M6 17.800h8" stroke="#666" stroke-width="1.500"/></g>
<path d="M1313.5 132.4h4.9l-2.4 2.4z" fill="#999"/>
<rect x="1790.500" y="126.500" width="11" height="13" fill="none" stroke="#9a9a9a"/><path d="M1794.500 130.500l-3 2.500 3 2.500z" fill="#9a9a9a"/>
<rect x="1816.500" y="126.500" width="11" height="13" fill="none" stroke="#9a9a9a"/><path d="M1823 130.500l3 2.500-3 2.500z" fill="#9a9a9a"/>
<rect x="1843" y="136" width="10" height="2.500" fill="#9a9a9a"/>
<rect x="1870.500" y="128.500" width="9" height="6" fill="none" stroke="#9a9a9a" stroke-width="1.200"/><rect x="1867.500" y="131.500" width="9" height="6" fill="#fff" stroke="#9a9a9a" stroke-width="1.200"/>
<path d="M1895 128l10 10M1905 128l-10 10" stroke="#9a9a9a" stroke-width="1.300"/>
<g transform="translate(10.0 165.0)"><path d="M2.500 9l6-6 8 0v9l-6 6-8-4z" fill="#f4f4f4" stroke="#444" stroke-width="1" stroke-linejoin="round"/><path d="M2.500 9l8 4v5M10.500 13l6-4" fill="none" stroke="#444" stroke-width=".9"/><path d="M7 4.25l4.5 -2.25l4.5 2.25l-4.5 2.25z" fill="#9fd4ee" stroke="#15557b" stroke-width="0.8" stroke-linejoin="round"/><path d="M7 4.25l4.5 2.25v4.95l-4.5 -2.25z" fill="#2b7fb0" stroke="#15557b" stroke-width="0.8" stroke-linejoin="round"/><path d="M16 4.25l-4.5 2.25v4.95l4.5 -2.25z" fill="#1d6e9c" stroke="#15557b" stroke-width="0.8" stroke-linejoin="round"/></g>
<g transform="translate(50.0 165.0)"><rect x="2.500" y="1.500" width="15" height="17" rx="1" fill="#fff" stroke="#15557b" stroke-width="1.100"/><rect x="2.500" y="1.500" width="15" height="3" fill="#2b7fb0"/><rect x="4.500" y="6.5" width="3.600" height="2.400" fill="#7fc1e2" stroke="#2b7fb0" stroke-width=".8"/><path d="M10 7.7h6" stroke="#333" stroke-width="1"/><rect x="4.500" y="10.5" width="3.600" height="2.400" fill="#7fc1e2" stroke="#2b7fb0" stroke-width=".8"/><path d="M10 11.7h6" stroke="#333" stroke-width="1"/><rect x="4.500" y="14.5" width="3.600" height="2.400" fill="#7fc1e2" stroke="#2b7fb0" stroke-width=".8"/><path d="M10 15.7h6" stroke="#333" stroke-width="1"/></g>
<g transform="translate(90.0 165.0)"><path d="M4.500 1v18M2 1.500h5M2 18.500h5M4.500 6.500h4M4.500 14.500h5" fill="none" stroke="#333" stroke-width="1.300"/><rect x="8.500" y="2.500" width="6" height="5" rx="1" fill="#fff" stroke="#333" stroke-width="1.100"/><rect x="9.500" y="11.500" width="6.500" height="6" rx="1" fill="#fff" stroke="#333" stroke-width="1.100"/><path d="M11.500 7.500v4" stroke="#333" stroke-width="1.100"/></g>
<g transform="translate(130.0 165.0)"><circle cx="10" cy="10" r="6" fill="none" stroke="#111" stroke-width="1.700"/><path d="M10 1v18M1 10h18" stroke="#111" stroke-width="1.700"/></g>
<g transform="translate(170.0 164.0)"><path d="M10.00 10.00L5.50 2.21A9 9 0 0 1 18.16 6.20Z" fill="#d8262c"/><path d="M10.00 10.00L18.16 6.20A9 9 0 0 1 14.50 17.79Z" fill="#f2c21a"/><path d="M10.00 10.00L14.50 17.79A9 9 0 0 1 1.84 13.80Z" fill="#2fa836"/><path d="M10.00 10.00L1.84 13.80A9 9 0 0 1 5.50 2.21Z" fill="#2f6fd6"/><circle cx="10" cy="10" r="9" fill="url(#shine)"/><ellipse cx="13" cy="6.500" rx="2.600" ry="4.200" transform="rotate(-35 13 6.500)" fill="#111"/></g>
<g transform="translate(6.0 191.0)"><path d="M10.00 10.00L8.52 1.63A8.5 8.5 0 0 1 18.47 9.26Z" fill="#d8262c"/><path d="M10.00 10.00L18.47 9.26A8.5 8.5 0 0 1 11.48 18.37Z" fill="#f2c21a"/><path d="M10.00 10.00L11.48 18.37A8.5 8.5 0 0 1 1.53 10.74Z" fill="#2fa836"/><path d="M10.00 10.00L1.53 10.74A8.5 8.5 0 0 1 8.52 1.63Z" fill="#2f6fd6"/><circle cx="10" cy="10" r="8.5" fill="url(#shine)"/></g>
<g transform="translate(33.0 191.0)"><path d="M3.500 5c0-3.500 13-3.500 13 0v10.500c0 3.500-13 3.500-13 0z" fill="#f4f4f4" stroke="#555" stroke-width="1"/><path d="M3.500 5c0 3.200 13 3.200 13 0" fill="none" stroke="#555" stroke-width="1"/><rect x="5.500" y="10.500" width="9" height="5" rx="1" fill="#8ccbe8" stroke="#2b7fb0" stroke-width=".8"/><rect x="9.300" y="11.500" width="1.400" height="3" fill="#e8f4fa"/></g>
<g transform="translate(60.0 191.0)"><rect x="1" y="1" width="18" height="13" fill="#cfe9f6"/><rect x="1" y="12" width="18" height="7" fill="#111"/><rect x="1.30" y="12.30" width="3.90" height="2.90" fill="#e8e8e8"/><rect x="10.30" y="12.30" width="3.90" height="2.90" fill="#e8e8e8"/><rect x="5.80" y="15.80" width="3.90" height="2.90" fill="#e8e8e8"/><rect x="14.80" y="15.80" width="3.90" height="2.90" fill="#e8e8e8"/><path d="M2 3.500h4l1 1.500h6v8h-11z" fill="#2b7fb0" stroke="#15557b" stroke-width=".8"/><circle cx="7.500" cy="9" r="2.200" fill="#dff0f8" stroke="#15557b" stroke-width=".8"/><path d="M18.60 4.50L21.00 4.50" stroke="#444" stroke-width=".9"/><path d="M17.84 6.34L19.54 8.04" stroke="#444" stroke-width=".9"/><path d="M16.00 7.10L16.00 9.50" stroke="#444" stroke-width=".9"/><path d="M14.16 6.34L12.46 8.04" stroke="#444" stroke-width=".9"/><path d="M13.40 4.50L11.00 4.50" stroke="#444" stroke-width=".9"/><path d="M14.16 2.66L12.46 0.96" stroke="#444" stroke-width=".9"/><path d="M16.00 1.90L16.00 -0.50" stroke="#444" stroke-width=".9"/><path d="M17.84 2.66L19.54 0.96" stroke="#444" stroke-width=".9"/><circle cx="16" cy="4.5" r="1.8" fill="#fff" stroke="#444" stroke-width=".9"/><path d="M15.500 8v5M14 10h4" stroke="#666" stroke-width=".7"/></g>
<g transform="translate(316.0 193.0)"><circle cx="8.500" cy="8" r="7.500" fill="#2f86b5"/><circle cx="8.500" cy="8" r="7.500" fill="url(#shine)"/><ellipse cx="11.500" cy="4.500" rx="2.200" ry="3.600" transform="rotate(-35 11.500 4.500)" fill="#0e2230"/><path d="M17.42 14.29L18.95 14.32L18.95 15.68L17.42 15.71L17.06 16.56L18.12 17.67L17.17 18.62L16.06 17.56L15.21 17.92L15.18 19.45L13.82 19.45L13.79 17.92L12.94 17.56L11.83 18.62L10.88 17.67L11.94 16.56L11.58 15.71L10.05 15.68L10.05 14.32L11.58 14.29L11.94 13.44L10.88 12.33L11.83 11.38L12.94 12.44L13.79 12.08L13.82 10.55L15.18 10.55L15.21 12.08L16.06 12.44L17.17 11.38L18.12 12.33L17.06 13.44Z" fill="#222"/><circle cx="14.500" cy="15" r="1.300" fill="#f7f7f7"/></g>
<circle cx="337" cy="227" r="6.500" fill="#fafafa" stroke="#555" stroke-width="1.100"/>
<text x="337" y="231" text-anchor="middle" font-family='"Liberation Sans",sans-serif' font-size="10.500" font-weight="700" fill="#2b7fb0">?</text>
<text x="1789.500" y="21.500" text-anchor="middle" font-family='"Liberation Sans",sans-serif' font-size="15.500" font-weight="700" fill="#6a6a6a">?</text>
<path d="M8 256.5l4.500 4-4.500 4z" fill="#777"/>
<path d="M6.0 281h7.500l-3.750 4z" fill="#666"/>
<path d="M6.0 369h7.500l-3.750 4z" fill="#666"/>
<path d="M8 499.5l4.500 4-4.500 4z" fill="#777"/>
<g transform="translate(23.5 250.5)"><rect x="0.5" y="8.5" width="19" height="11.5" fill="#111"/><rect x="0.80" y="8.80" width="4.15" height="3.23" fill="#e8e8e8"/><rect x="10.30" y="8.80" width="4.15" height="3.23" fill="#e8e8e8"/><rect x="5.55" y="12.63" width="4.15" height="3.23" fill="#e8e8e8"/><rect x="15.05" y="12.63" width="4.15" height="3.23" fill="#e8e8e8"/><rect x="0.80" y="16.47" width="4.15" height="3.23" fill="#e8e8e8"/><rect x="10.30" y="16.47" width="4.15" height="3.23" fill="#e8e8e8"/><path d="M9.50 8.00L8.23 0.81A7.3 7.3 0 0 1 16.77 7.36Z" fill="#d8262c"/><path d="M9.50 8.00L16.77 7.36A7.3 7.3 0 0 1 10.77 15.19Z" fill="#f2c21a"/><path d="M9.50 8.00L10.77 15.19A7.3 7.3 0 0 1 2.23 8.64Z" fill="#2fa836"/><path d="M9.50 8.00L2.23 8.64A7.3 7.3 0 0 1 8.23 0.81Z" fill="#2f6fd6"/><circle cx="9.5" cy="8" r="7.3" fill="url(#shine)"/></g>
<g transform="translate(24.0 273.5)"><path d="M1.500 2.500h6l1.500 2h8.500a1 1 0 0 1 1 1v11a1 1 0 0 1-1 1h-15a1 1 0 0 1-1-1z" fill="#f0f0f0" stroke="#333" stroke-width="1.100" stroke-linejoin="round"/><path d="M1.500 6.500h17" stroke="#333" stroke-width=".7"/><circle cx="10" cy="12" r="4" fill="#2b7fb0" stroke="#15557b" stroke-width=".8"/><circle cx="10" cy="12" r="2.300" fill="#e6f3fa"/><path d="M8.300 11l1.700 2.600 1.700-2.600z" fill="#111"/></g>
<g transform="translate(46.5 295.5)"><rect x=".500" y="6" width="19" height="9" fill="#cfe9f6"/><rect x="0.5" y="13" width="19" height="6.5" fill="#111"/><rect x="0.80" y="13.30" width="4.15" height="2.65" fill="#e8e8e8"/><rect x="10.30" y="13.30" width="4.15" height="2.65" fill="#e8e8e8"/><rect x="5.55" y="16.55" width="4.15" height="2.65" fill="#e8e8e8"/><rect x="15.05" y="16.55" width="4.15" height="2.65" fill="#e8e8e8"/><path d="M2 13c0-9 16-9 16 0" fill="none" stroke="#2b7fb0" stroke-width="1.200" stroke-dasharray="1.500 1.200"/><path d="M14.40 6.00L16.80 6.00" stroke="#222" stroke-width=".9"/><path d="M13.11 9.11L14.81 10.81" stroke="#222" stroke-width=".9"/><path d="M10.00 10.40L10.00 12.80" stroke="#222" stroke-width=".9"/><path d="M6.89 9.11L5.19 10.81" stroke="#222" stroke-width=".9"/><path d="M5.60 6.00L3.20 6.00" stroke="#222" stroke-width=".9"/><path d="M6.89 2.89L5.19 1.19" stroke="#222" stroke-width=".9"/><path d="M10.00 1.60L10.00 -0.80" stroke="#222" stroke-width=".9"/><path d="M13.11 2.89L14.81 1.19" stroke="#222" stroke-width=".9"/><circle cx="10" cy="6" r="3.6" fill="#f4f4f4" stroke="#222" stroke-width=".9"/></g>
<g transform="translate(46.5 317.0)"><rect x="3.500" y="9" width="13" height="10" fill="#dedede"/><path d="M14.20 7.00L16.60 7.00" stroke="#c4c4c4" stroke-width=".9"/><path d="M12.97 9.97L14.67 11.67" stroke="#c4c4c4" stroke-width=".9"/><path d="M10.00 11.20L10.00 13.60" stroke="#c4c4c4" stroke-width=".9"/><path d="M7.03 9.97L5.33 11.67" stroke="#c4c4c4" stroke-width=".9"/><path d="M5.80 7.00L3.40 7.00" stroke="#c4c4c4" stroke-width=".9"/><path d="M7.03 4.03L5.33 2.33" stroke="#c4c4c4" stroke-width=".9"/><path d="M10.00 2.80L10.00 0.40" stroke="#c4c4c4" stroke-width=".9"/><path d="M12.97 4.03L14.67 2.33" stroke="#c4c4c4" stroke-width=".9"/><circle cx="10" cy="7" r="3.4" fill="#f4f4f4" stroke="#c4c4c4" stroke-width=".9"/></g>
<g transform="translate(46.5 339.0)"><rect x="3.500" y="9" width="13" height="10" fill="#dedede"/><path d="M14.20 7.00L16.60 7.00" stroke="#c4c4c4" stroke-width=".9"/><path d="M12.97 9.97L14.67 11.67" stroke="#c4c4c4" stroke-width=".9"/><path d="M10.00 11.20L10.00 13.60" stroke="#c4c4c4" stroke-width=".9"/><path d="M7.03 9.97L5.33 11.67" stroke="#c4c4c4" stroke-width=".9"/><path d="M5.80 7.00L3.40 7.00" stroke="#c4c4c4" stroke-width=".9"/><path d="M7.03 4.03L5.33 2.33" stroke="#c4c4c4" stroke-width=".9"/><path d="M10.00 2.80L10.00 0.40" stroke="#c4c4c4" stroke-width=".9"/><path d="M12.97 4.03L14.67 2.33" stroke="#c4c4c4" stroke-width=".9"/><circle cx="10" cy="7" r="3.4" fill="#f4f4f4" stroke="#c4c4c4" stroke-width=".9"/></g>
<g transform="translate(24.0 361.5)"><path d="M1.500 2.500h6l1.500 2h8.500a1 1 0 0 1 1 1v11a1 1 0 0 1-1 1h-15a1 1 0 0 1-1-1z" fill="#f0f0f0" stroke="#333" stroke-width="1.100" stroke-linejoin="round"/><path d="M1.500 6.500h17" stroke="#333" stroke-width=".7"/><path d="M4 9.500v6M4 12.500h3M8.500 9h3M8.500 13.500h3M10 9v4.500M5 16.500h9M5 15.500v2M9.500 15.500v2M14 15.500v2" stroke="#222" stroke-width="1" fill="none"/><path d="M13 8.500c2 .8 2 4.500 0 5.500" fill="none" stroke="#2b7fb0" stroke-width="1.300"/></g>
<g transform="translate(47.0 383.0)"><path d="M10 1.500c-3.300 0-5.300 2.500-5.300 5.200c0 2.800 2.300 4.300 2.600 7.300h5.400c.3-3 2.600-4.500 2.600-7.300c0-2.700-2-5.200-5.300-5.200z" fill="#fafafa" stroke="#333" stroke-width="1"/><rect x="7.300" y="14.500" width="5.400" height="3.500" rx=".8" fill="#222"/></g>
<g transform="translate(46.5 405.0)"><rect x="3.500" y="9" width="13" height="10" fill="url(#skyg)"/><path d="M14.20 7.00L16.60 7.00" stroke="#222" stroke-width=".9"/><path d="M12.97 9.97L14.67 11.67" stroke="#222" stroke-width=".9"/><path d="M10.00 11.20L10.00 13.60" stroke="#222" stroke-width=".9"/><path d="M7.03 9.97L5.33 11.67" stroke="#222" stroke-width=".9"/><path d="M5.80 7.00L3.40 7.00" stroke="#222" stroke-width=".9"/><path d="M7.03 4.03L5.33 2.33" stroke="#222" stroke-width=".9"/><path d="M10.00 2.80L10.00 0.40" stroke="#222" stroke-width=".9"/><path d="M12.97 4.03L14.67 2.33" stroke="#222" stroke-width=".9"/><circle cx="10" cy="7" r="3.4" fill="#eee" stroke="#222" stroke-width=".9"/></g>
<g transform="translate(46.5 427.0)"><rect x="3.500" y="9" width="13" height="10" fill="url(#skyg)"/><path d="M14.20 7.00L16.60 7.00" stroke="#222" stroke-width=".9"/><path d="M12.97 9.97L14.67 11.67" stroke="#222" stroke-width=".9"/><path d="M10.00 11.20L10.00 13.60" stroke="#222" stroke-width=".9"/><path d="M7.03 9.97L5.33 11.67" stroke="#222" stroke-width=".9"/><path d="M5.80 7.00L3.40 7.00" stroke="#222" stroke-width=".9"/><path d="M7.03 4.03L5.33 2.33" stroke="#222" stroke-width=".9"/><path d="M10.00 2.80L10.00 0.40" stroke="#222" stroke-width=".9"/><path d="M12.97 4.03L14.67 2.33" stroke="#222" stroke-width=".9"/><circle cx="10" cy="7" r="3.4" fill="#eee" stroke="#222" stroke-width=".9"/></g>
<g transform="translate(24.0 449.5)"><path d="M1.500 2v3" stroke="#333" stroke-width="1.500"/><path d="M1.500 2h7l2.500 2.500" fill="none" stroke="#333" stroke-width="1.200"/><rect x="2" y="4.500" width="11.500" height="11" rx="1.500" fill="#2b7fb0" stroke="#15557b" stroke-width="1"/><path d="M3 6h9.500" stroke="#9fd4ee" stroke-width="1"/><rect x="7.500" y="8" width="4" height="4" rx="1" fill="#f4f4f4" stroke="#15557b" stroke-width=".9"/><path d="M13.500 8l2.500-1.500v7l-2.500-1.500z" fill="#f4f4f4" stroke="#333" stroke-width=".9"/><rect x="16.500" y="6" width="2" height="8" rx="1" fill="#f4f4f4" stroke="#333" stroke-width=".9"/></g>
<g transform="translate(24.0 471.0)"><circle cx="6" cy="2.500" r="1.500" fill="#f4f4f4" stroke="#555" stroke-width=".8"/><path d="M5 4.500l2.500.5 1 5-2.500.5z" fill="#f4f4f4" stroke="#555" stroke-width=".8"/><path d="M7 6l3.500 2.500" stroke="#555" stroke-width="1"/><path d="M6.500 10l-5 8M6.500 10l6.500 6.500" stroke="#2b7fb0" stroke-width="1.800" stroke-linecap="round"/><path d="M.8 17.500l1.500 1.500M12 16l2.500 1.500" stroke="#444" stroke-width="1.300"/><path d="M10 4.500h8" stroke="#111" stroke-width="1.300"/><path d="M16.500 2l3 2.500-3 2.500z" fill="#111"/></g>
<g transform="translate(24.0 493.5)"><path d="M3 5.500l1.500-2.500h3l1.200 1.500h8.800a1 1 0 0 1 1 1v11a1 1 0 0 1-1 1h-15a1 1 0 0 1-1-1v-10a1 1 0 0 1 1-1z" fill="#e6e6e6" stroke="#333" stroke-width="1.100" stroke-linejoin="round"/><path d="M9.500 4.500l1-1.800h4.500l1 1.800" fill="#ddd" stroke="#333" stroke-width="1"/><circle cx="11" cy="11.500" r="5" fill="#f4f4f4" stroke="#333" stroke-width="1.100"/><circle cx="11" cy="11.500" r="3.200" fill="#555" stroke="#222" stroke-width=".8"/><circle cx="10" cy="10.500" r="1" fill="#ddd"/><circle cx="16.500" cy="6.500" r=".8" fill="#333"/></g>
<g transform="translate(1897.0 179.5)"><path d="M4.500 10.500v7.500h11v-7.500" fill="#f6f6f6" stroke="#444" stroke-width="1.100"/><path d="M1.500 11l8.500-8 8.500 8" fill="none" stroke="#1d5f86" stroke-width="2"/><rect x="8.500" y="12" width="3.600" height="6" fill="#fff" stroke="#555" stroke-width=".9"/></g>
<g transform="translate(1897.0 203.0)"><g fill="#f4f4f4" stroke="#444" stroke-width="1"><path d="M3 6l3-3 3 1v12l-3 3-3-1z"/><path d="M7.500 5.500l3-3 3 1v12l-3 3-3-1z"/><path d="M12 5l3-3 2.500 1v12l-3 3-2.500-1z"/></g></g>
<g transform="translate(1897.0 227.0)"><path d="M1.500 3.500h6l1.500 2h7.500v3h-12l-3 9z" fill="#d8d8d8" stroke="#555" stroke-width="1"/><path d="M4.500 8.500h15l-3.500 9h-14.500z" fill="#f6f6f6" stroke="#555" stroke-width="1"/></g>
<g transform="translate(1897.0 250.5)"><rect x="1.500" y="2.500" width="17" height="15" rx="1" fill="#f4f4f4" stroke="#333" stroke-width="1.100"/><rect x="3.500" y="4.500" width="8" height="3" fill="#8ccbe8" stroke="#2b7fb0" stroke-width=".9"/><path d="M6.500 7.500v3.500h-3v4.500h9v-4.500h-3v-3.500" fill="#8ccbe8" stroke="#2b7fb0" stroke-width=".9"/><rect x="13.500" y="4.500" width="3" height="3" fill="#2b7fb0"/><rect x="13.800" y="9.500" width="2.800" height="6" fill="#cfcfcf" stroke="#666" stroke-width=".8"/></g>
<g transform="translate(1897.0 275.0)"><path d="M10.00 10.00L8.61 2.12A8 8 0 0 1 17.97 9.30Z" fill="#d8262c"/><path d="M10.00 10.00L17.97 9.30A8 8 0 0 1 11.39 17.88Z" fill="#f2c21a"/><path d="M10.00 10.00L11.39 17.88A8 8 0 0 1 2.03 10.70Z" fill="#2fa836"/><path d="M10.00 10.00L2.03 10.70A8 8 0 0 1 8.61 2.12Z" fill="#2f6fd6"/><circle cx="10" cy="10" r="8" fill="url(#shine)"/></g>
<g transform="translate(1897.0 299.0)"><rect x="2" y="1.500" width="16" height="17" rx="1" fill="#fff" stroke="#15557b" stroke-width="1.100"/><rect x="2" y="1.500" width="16" height="3" fill="#2b7fb0"/><rect x="4" y="6.5" width="3.600" height="2.400" fill="#7fc1e2" stroke="#2b7fb0" stroke-width=".8"/><path d="M9.500 7.7h6.500" stroke="#333" stroke-width="1"/><rect x="4" y="10.5" width="3.600" height="2.400" fill="#7fc1e2" stroke="#2b7fb0" stroke-width=".8"/><path d="M9.500 11.7h6.500" stroke="#333" stroke-width="1"/><rect x="4" y="14.5" width="3.600" height="2.400" fill="#7fc1e2" stroke="#2b7fb0" stroke-width=".8"/><path d="M9.500 15.7h6.500" stroke="#333" stroke-width="1"/></g>
<g transform="translate(1897.0 323.0)"><circle cx="10" cy="10" r="8.300" fill="#2f7fd0"/><circle cx="10" cy="10" r="8.300" fill="url(#shine)"/><path d="M5 8c1.500-3.500 7-4 9-1.500l1.800-1.500v5.500h-5.500l1.800-1.800c-1.500-1.500-4-1-4.800.8z" fill="#fff" stroke="#123" stroke-width=".7"/><path d="M15 12c-1.500 3.500-7 4-9 1.500l-1.800 1.500v-5.500h5.500l-1.800 1.800c1.500 1.500 4 1 4.800-.8z" fill="#fff" stroke="#123" stroke-width=".7"/></g>
<rect x="30.600" y="1048.500" width="2" height="10" fill="#9a9a9a"/><path d="M40.500 1048.500l-7.500 5 7.500 5z" fill="#9a9a9a"/>
<path d="M55 1048.500l-7.500 5 7.500 5z" fill="#9a9a9a"/>
<path d="M64.500 1048.500l7.500 5-7.500 5z" fill="#9a9a9a"/>
<path d="M80 1048.500l7.500 5-7.500 5z" fill="#9a9a9a"/><rect x="87.500" y="1048.500" width="2" height="10" fill="#9a9a9a"/>
<rect x="42.5" y="1047" width="1" height="13" fill="#a2a2a2"/><rect x="43.5" y="1047" width="1" height="13" fill="#bcbcbc"/>
<rect x="58.5" y="1047" width="1" height="13" fill="#a2a2a2"/><rect x="59.5" y="1047" width="1" height="13" fill="#bcbcbc"/>
<rect x="74.5" y="1047" width="1" height="13" fill="#a2a2a2"/><rect x="75.5" y="1047" width="1" height="13" fill="#bcbcbc"/>
<path d="M324.500 1049l5 8M327 1048.500l5 8M324 1053l10 5" stroke="#2a6a3a" stroke-width="1" fill="none"/><path d="M332.500 1048v6M330.500 1052.500l2 2.500 2-2.500z" stroke="#d01010" stroke-width="1.200" fill="#d01010"/>
<path d="M391.500 990v-26" stroke="#111" stroke-width="2.600"/><path d="M387 968.500l4.500-9.500 4.500 9.500z" fill="#111"/><path d="M391.500 989.500l-17 4" stroke="#111" stroke-width="2.600"/><path d="M377.500 989l-10 4.500 10.500 3.500z" fill="#111"/><path d="M391.500 989.500l-10-6" stroke="#111" stroke-width="2.600"/><circle cx="379.500" cy="982.500" r="3.600" fill="#0a0aa0"/><path d="M393.500 976v13.500" stroke="#0a7a0a" stroke-width=".8"/><path d="M385 990.300l8.500-.8" stroke="#1a1ae0" stroke-width=".8"/>
<path d="M1803.500 1074h7l-3.500-4z" fill="#222"/>
<path d="M1905.300 1064.300L1910.800 1064.300L1913.300 1066.800L1913.300 1070.600L1906.600 1077.800L1903.200 1077.800L1899.300 1074L1899.300 1070.600Z" fill="url(#tagg)" stroke="#b86000" stroke-width="1.100" stroke-linejoin="round"/><circle cx="1909.200" cy="1068.100" r="1.500" fill="#fff" stroke="#a04800" stroke-width=".9"/><path d="M1903.300 1070.500l3.600 3.600M1902 1072l3.400 3.400M1904.800 1069.200l3.400 3.400" stroke="#c89000" stroke-width=".9" stroke-dasharray="1 .7"/></svg>
</body></html>
